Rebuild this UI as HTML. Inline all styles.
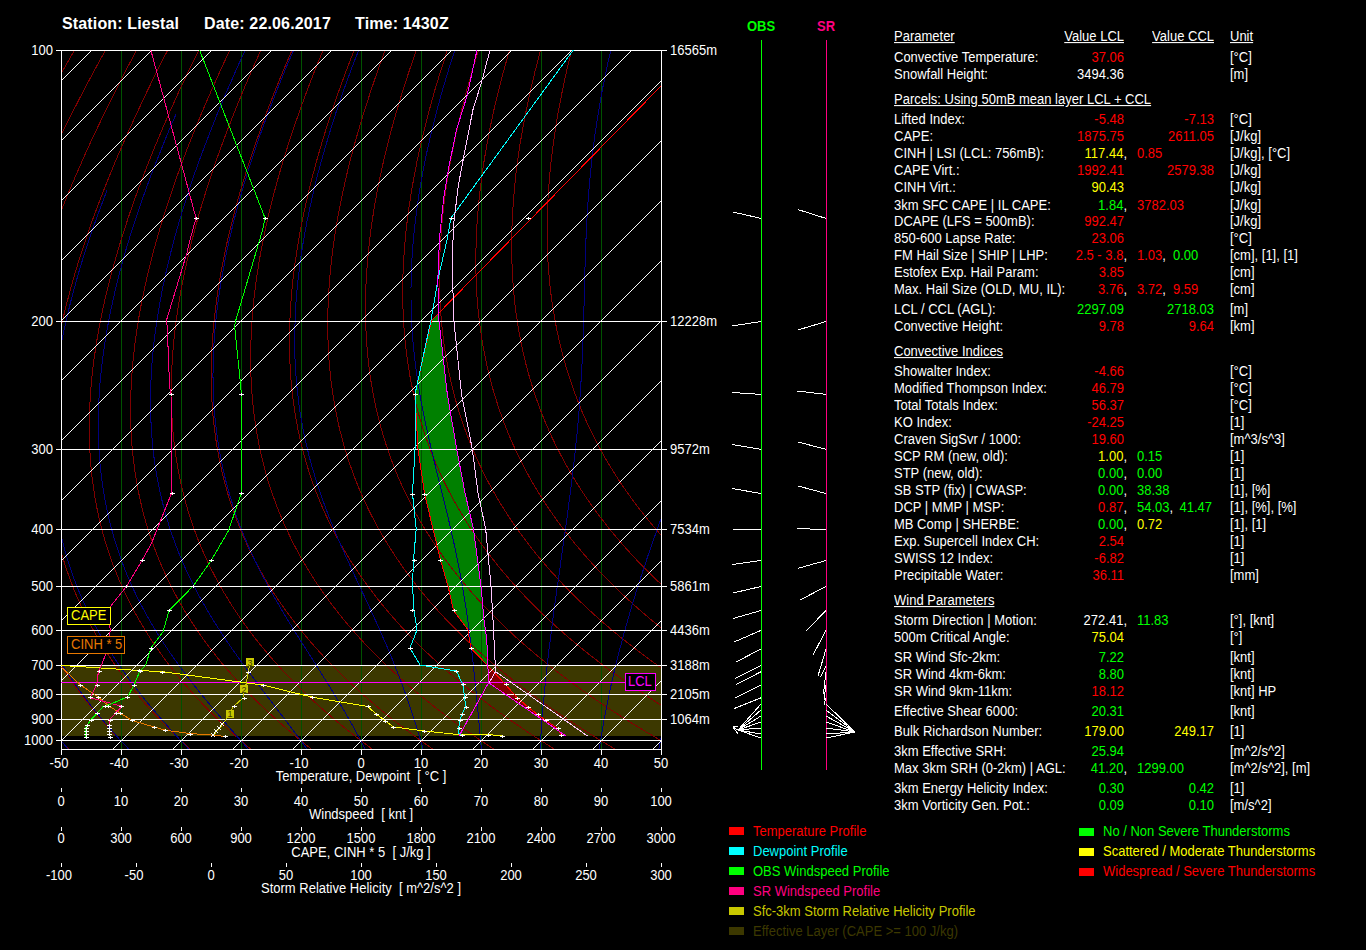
<!DOCTYPE html>
<html><head><meta charset="utf-8"><style>
html,body{margin:0;padding:0;background:#000;width:1366px;height:950px;overflow:hidden;}
.t{position:absolute;font-family:"Liberation Sans",sans-serif;white-space:pre;line-height:16px;}
svg{position:absolute;left:0;top:0;}
</style></head><body>
<svg width="1366" height="950" viewBox="0 0 1366 950" shape-rendering="crispEdges">
<defs><clipPath id="cp"><rect x="61" y="50" width="601" height="700"/></clipPath></defs>
<rect x="61" y="665" width="600" height="71" fill="#3c3800"/>
<polygon points="437.7,314.0 439.4,321.0 447.3,394.0 456.7,449.0 465.0,493.0 473.5,529.0 481.0,586.0 484.0,620.0 486.8,640.0 488.0,666.0 488.6,666.4 471.0,648.5 467.9,629.8 453.6,610.5 448.0,586.0 440.5,560.0 433.0,529.0 424.5,493.5 418.0,449.0 415.0,394.0 417.0,385.0 431.0,321.0 437.7,314.0" fill="#008000" stroke="none"/>
<polygon points="488.6,666.4 505.5,684.5 517.0,697.5 528.0,707.0 537.5,714.5 546.0,720.5 558.0,728.5 562.0,735.0 566.0,736.0 488.6,682.7" fill="#800000" stroke="none"/>
<line x1="121.5" y1="50" x2="121.5" y2="749" stroke="#005200" stroke-width="1" />
<line x1="181.5" y1="50" x2="181.5" y2="749" stroke="#005200" stroke-width="1" />
<line x1="241.5" y1="50" x2="241.5" y2="749" stroke="#005200" stroke-width="1" />
<line x1="301.5" y1="50" x2="301.5" y2="749" stroke="#005200" stroke-width="1" />
<line x1="361.5" y1="50" x2="361.5" y2="749" stroke="#005200" stroke-width="1" />
<line x1="421.5" y1="50" x2="421.5" y2="749" stroke="#005200" stroke-width="1" />
<line x1="481.5" y1="50" x2="481.5" y2="749" stroke="#005200" stroke-width="1" />
<line x1="541.5" y1="50" x2="541.5" y2="749" stroke="#005200" stroke-width="1" />
<line x1="601.5" y1="50" x2="601.5" y2="749" stroke="#005200" stroke-width="1" />
<polyline points="72.3,2.4 57.2,27.1 43.4,50.1 30.8,71.5 19.3,91.6 8.7,110.5 -1.1,128.3 -10.0,145.0 -18.3,160.9 -26.0,176.0 -33.2,190.3 -39.8,203.9 -45.9,216.9 -51.7,229.3 -57.0,241.2 -62.0,252.6 -66.7,263.5 -71.0,273.9 -75.1,284.0 -78.9,293.7 -82.5,303.0 -85.8,312.0 -89.0,320.7 -91.9,329.1 -94.7,337.2 -97.3,345.0 -99.7,352.6 -102.0,360.0 -104.1,367.2 -106.1,374.1 -108.0,380.8 -109.7,387.4 -111.4,393.8 -112.9,400.0 -114.4,406.0 -115.7,411.9 -117.0,417.6 -118.1,423.2 -119.2,428.6 -120.2,433.9 -121.2,439.1 -122.1,444.2 -122.9,449.1 -123.6,453.9 -124.3,458.7 -124.9,463.3 -125.5,467.8 -126.0,472.3 -126.5,476.6 -126.9,480.9 -127.3,485.0 -127.7,489.1 -128.0,493.1 -128.2,497.0 -128.5,500.9 -128.6,504.7 -128.8,508.4 -128.9,512.0 -129.0,515.6 -129.1,519.1 -129.1,522.6 -129.1,526.0 -129.1,529.3 -129.0,532.6 -128.9,535.8 -128.8,539.0 -128.7,542.1 -128.6,545.2 -128.4,548.2 -128.2,551.2 -128.0,554.2 -127.8,557.1 -127.5,559.9 -127.3,562.7 -127.0,565.5 -126.7,568.2 -126.4,570.9 -126.1,573.5 -125.7,576.1 -125.4,578.7 -125.0,581.3 -124.6,583.8 -124.2,586.2 -123.8,588.7 -123.4,591.1 -123.0,593.5 -122.5,595.8 -122.1,598.1 -121.6,600.4 -121.2,602.7 -120.7,604.9 -120.2,607.1 -119.7,609.3 -119.2,611.5 -118.7,613.6 -118.2,615.7 -117.6,617.8 -117.1,619.8 -116.5,621.9 -116.0,623.9 -115.4,625.9 -114.9,627.8 -114.3,629.8 -113.7,631.7 -113.1,633.6 -112.6,635.5 -112.0,637.4 -111.4,639.2 -110.8,641.0 -110.1,642.8 -109.5,644.6 -108.9,646.4 -108.3,648.1 -107.7,649.9 -107.0,651.6 -106.4,653.3 -105.8,655.0 -105.1,656.7 -104.5,658.3 -103.8,659.9 -103.2,661.6 -102.5,663.2 -101.9,664.8 -101.2,666.3 -100.5,667.9 -99.9,669.5 -99.2,671.0 -98.5,672.5 -97.8,674.0 -97.2,675.5 -96.5,677.0 -95.8,678.5 -95.1,679.9 -94.4,681.4 -93.7,682.8 -93.0,684.2 -92.3,685.6 -91.7,687.0 -91.0,688.4 -90.3,689.8 -89.6,691.2 -88.9,692.5 -88.2,693.9 -87.5,695.2 -86.7,696.5 -86.0,697.8 -85.3,699.1 -84.6,700.4 -83.9,701.7 -83.2,703.0 -82.5,704.3 -81.8,705.5 -81.1,706.8 -80.3,708.0 -79.6,709.2 -78.9,710.4 -78.2,711.7 -77.5,712.9 -76.8,714.0 -76.0,715.2 -75.3,716.4 -74.6,717.6 -73.9,718.7 -73.2,719.9 -72.4,721.0 -71.7,722.2 -71.0,723.3 -70.3,724.4 -69.5,725.5 -68.8,726.6 -68.1,727.7 -67.4,728.8 -66.7,729.9 -65.9,731.0 -65.2,732.1 -64.5,733.1 -63.8,734.2 -63.0,735.2 -62.3,736.3 -61.6,737.3 -60.9,738.4 -60.1,739.4 -59.4,740.4 -56.5,744.4 -53.1,749.0" stroke="#800000" stroke-width="1" fill="none" clip-path="url(#cp)"/>
<polyline points="102.5,2.4 87.8,27.1 74.5,50.1 62.3,71.5 51.2,91.6 41.0,110.5 31.7,128.3 23.1,145.0 15.2,160.9 7.8,176.0 1.1,190.3 -5.2,203.9 -11.0,216.9 -16.4,229.3 -21.5,241.2 -26.1,252.6 -30.5,263.5 -34.6,273.9 -38.3,284.0 -41.9,293.7 -45.2,303.0 -48.2,312.0 -51.1,320.7 -53.8,329.1 -56.3,337.2 -58.6,345.0 -60.8,352.6 -62.8,360.0 -64.7,367.2 -66.4,374.1 -68.1,380.8 -69.6,387.4 -71.0,393.8 -72.3,400.0 -73.5,406.0 -74.7,411.9 -75.7,417.6 -76.6,423.2 -77.5,428.6 -78.3,433.9 -79.1,439.1 -79.7,444.2 -80.3,449.1 -80.9,453.9 -81.4,458.7 -81.8,463.3 -82.2,467.8 -82.5,472.3 -82.8,476.6 -83.0,480.9 -83.2,485.0 -83.4,489.1 -83.5,493.1 -83.6,497.0 -83.6,500.9 -83.7,504.7 -83.6,508.4 -83.6,512.0 -83.5,515.6 -83.4,519.1 -83.2,522.6 -83.1,526.0 -82.9,529.3 -82.7,532.6 -82.4,535.8 -82.2,539.0 -81.9,542.1 -81.6,545.2 -81.3,548.2 -80.9,551.2 -80.6,554.2 -80.2,557.1 -79.8,559.9 -79.4,562.7 -78.9,565.5 -78.5,568.2 -78.0,570.9 -77.6,573.5 -77.1,576.1 -76.6,578.7 -76.1,581.3 -75.5,583.8 -75.0,586.2 -74.5,588.7 -73.9,591.1 -73.3,593.5 -72.8,595.8 -72.2,598.1 -71.6,600.4 -71.0,602.7 -70.4,604.9 -69.7,607.1 -69.1,609.3 -68.5,611.5 -67.8,613.6 -67.2,615.7 -66.5,617.8 -65.9,619.8 -65.2,621.9 -64.5,623.9 -63.8,625.9 -63.1,627.8 -62.4,629.8 -61.7,631.7 -61.0,633.6 -60.3,635.5 -59.6,637.4 -58.9,639.2 -58.2,641.0 -57.4,642.8 -56.7,644.6 -56.0,646.4 -55.2,648.1 -54.5,649.9 -53.8,651.6 -53.0,653.3 -52.2,655.0 -51.5,656.7 -50.7,658.3 -50.0,659.9 -49.2,661.6 -48.4,663.2 -47.7,664.8 -46.9,666.3 -46.1,667.9 -45.3,669.5 -44.6,671.0 -43.8,672.5 -43.0,674.0 -42.2,675.5 -41.4,677.0 -40.6,678.5 -39.8,679.9 -39.1,681.4 -38.3,682.8 -37.5,684.2 -36.7,685.6 -35.9,687.0 -35.1,688.4 -34.3,689.8 -33.5,691.2 -32.7,692.5 -31.9,693.9 -31.1,695.2 -30.3,696.5 -29.4,697.8 -28.6,699.1 -27.8,700.4 -27.0,701.7 -26.2,703.0 -25.4,704.3 -24.6,705.5 -23.8,706.8 -23.0,708.0 -22.2,709.2 -21.3,710.4 -20.5,711.7 -19.7,712.9 -18.9,714.0 -18.1,715.2 -17.3,716.4 -16.5,717.6 -15.7,718.7 -14.8,719.9 -14.0,721.0 -13.2,722.2 -12.4,723.3 -11.6,724.4 -10.8,725.5 -10.0,726.6 -9.2,727.7 -8.3,728.8 -7.5,729.9 -6.7,731.0 -5.9,732.1 -5.1,733.1 -4.3,734.2 -3.5,735.2 -2.7,736.3 -1.8,737.3 -1.0,738.4 -0.2,739.4 0.6,740.4 3.8,744.4 7.6,749.0" stroke="#800000" stroke-width="1" fill="none" clip-path="url(#cp)"/>
<polyline points="132.7,2.4 118.4,27.1 105.5,50.1 93.8,71.5 83.1,91.6 73.4,110.5 64.4,128.3 56.2,145.0 48.7,160.9 41.7,176.0 35.3,190.3 29.3,203.9 23.9,216.9 18.8,229.3 14.1,241.2 9.7,252.6 5.7,263.5 1.9,273.9 -1.6,284.0 -4.8,293.7 -7.8,303.0 -10.6,312.0 -13.2,320.7 -15.6,329.1 -17.8,337.2 -19.9,345.0 -21.8,352.6 -23.6,360.0 -25.2,367.2 -26.8,374.1 -28.2,380.8 -29.4,387.4 -30.6,393.8 -31.7,400.0 -32.7,406.0 -33.6,411.9 -34.4,417.6 -35.2,423.2 -35.8,428.6 -36.4,433.9 -36.9,439.1 -37.4,444.2 -37.8,449.1 -38.1,453.9 -38.4,458.7 -38.7,463.3 -38.9,467.8 -39.0,472.3 -39.1,476.6 -39.1,480.9 -39.2,485.0 -39.1,489.1 -39.1,493.1 -39.0,497.0 -38.8,500.9 -38.7,504.7 -38.5,508.4 -38.2,512.0 -38.0,515.6 -37.7,519.1 -37.4,522.6 -37.1,526.0 -36.7,529.3 -36.3,532.6 -35.9,535.8 -35.5,539.0 -35.1,542.1 -34.6,545.2 -34.1,548.2 -33.6,551.2 -33.1,554.2 -32.6,557.1 -32.0,559.9 -31.5,562.7 -30.9,565.5 -30.3,568.2 -29.7,570.9 -29.1,573.5 -28.4,576.1 -27.8,578.7 -27.1,581.3 -26.5,583.8 -25.8,586.2 -25.1,588.7 -24.4,591.1 -23.7,593.5 -23.0,595.8 -22.3,598.1 -21.5,600.4 -20.8,602.7 -20.1,604.9 -19.3,607.1 -18.5,609.3 -17.8,611.5 -17.0,613.6 -16.2,615.7 -15.4,617.8 -14.6,619.8 -13.8,621.9 -13.0,623.9 -12.2,625.9 -11.4,627.8 -10.6,629.8 -9.8,631.7 -8.9,633.6 -8.1,635.5 -7.3,637.4 -6.4,639.2 -5.6,641.0 -4.7,642.8 -3.9,644.6 -3.0,646.4 -2.2,648.1 -1.3,649.9 -0.5,651.6 0.4,653.3 1.3,655.0 2.1,656.7 3.0,658.3 3.9,659.9 4.8,661.6 5.6,663.2 6.5,664.8 7.4,666.3 8.3,667.9 9.2,669.5 10.1,671.0 11.0,672.5 11.8,674.0 12.7,675.5 13.6,677.0 14.5,678.5 15.4,679.9 16.3,681.4 17.2,682.8 18.1,684.2 19.0,685.6 19.9,687.0 20.8,688.4 21.7,689.8 22.6,691.2 23.5,692.5 24.4,693.9 25.3,695.2 26.2,696.5 27.1,697.8 28.1,699.1 29.0,700.4 29.9,701.7 30.8,703.0 31.7,704.3 32.6,705.5 33.5,706.8 34.4,708.0 35.3,709.2 36.2,710.4 37.1,711.7 38.0,712.9 38.9,714.0 39.8,715.2 40.7,716.4 41.7,717.6 42.6,718.7 43.5,719.9 44.4,721.0 45.3,722.2 46.2,723.3 47.1,724.4 48.0,725.5 48.9,726.6 49.8,727.7 50.7,728.8 51.6,729.9 52.5,731.0 53.4,732.1 54.3,733.1 55.2,734.2 56.1,735.2 57.0,736.3 57.9,737.3 58.8,738.4 59.7,739.4 60.6,740.4 64.2,744.4 68.3,749.0" stroke="#800000" stroke-width="1" fill="none" clip-path="url(#cp)"/>
<polyline points="162.8,2.4 149.1,27.1 136.6,50.1 125.3,71.5 115.1,91.6 105.7,110.5 97.2,128.3 89.3,145.0 82.2,160.9 75.6,176.0 69.5,190.3 63.9,203.9 58.8,216.9 54.0,229.3 49.6,241.2 45.6,252.6 41.8,263.5 38.4,273.9 35.2,284.0 32.2,293.7 29.5,303.0 27.0,312.0 24.7,320.7 22.5,329.1 20.6,337.2 18.8,345.0 17.1,352.6 15.6,360.0 14.2,367.2 12.9,374.1 11.7,380.8 10.7,387.4 9.8,393.8 8.9,400.0 8.1,406.0 7.5,411.9 6.9,417.6 6.3,423.2 5.9,428.6 5.5,433.9 5.2,439.1 4.9,444.2 4.7,449.1 4.6,453.9 4.5,458.7 4.5,463.3 4.5,467.8 4.5,472.3 4.6,476.6 4.8,480.9 4.9,485.0 5.1,489.1 5.4,493.1 5.7,497.0 6.0,500.9 6.3,504.7 6.7,508.4 7.1,512.0 7.5,515.6 8.0,519.1 8.5,522.6 9.0,526.0 9.5,529.3 10.0,532.6 10.6,535.8 11.2,539.0 11.8,542.1 12.4,545.2 13.0,548.2 13.7,551.2 14.4,554.2 15.0,557.1 15.7,559.9 16.5,562.7 17.2,565.5 17.9,568.2 18.7,570.9 19.4,573.5 20.2,576.1 21.0,578.7 21.8,581.3 22.6,583.8 23.4,586.2 24.3,588.7 25.1,591.1 25.9,593.5 26.8,595.8 27.6,598.1 28.5,600.4 29.4,602.7 30.3,604.9 31.1,607.1 32.0,609.3 32.9,611.5 33.8,613.6 34.8,615.7 35.7,617.8 36.6,619.8 37.5,621.9 38.4,623.9 39.4,625.9 40.3,627.8 41.3,629.8 42.2,631.7 43.2,633.6 44.1,635.5 45.1,637.4 46.0,639.2 47.0,641.0 47.9,642.8 48.9,644.6 49.9,646.4 50.9,648.1 51.8,649.9 52.8,651.6 53.8,653.3 54.8,655.0 55.8,656.7 56.7,658.3 57.7,659.9 58.7,661.6 59.7,663.2 60.7,664.8 61.7,666.3 62.7,667.9 63.7,669.5 64.7,671.0 65.7,672.5 66.7,674.0 67.7,675.5 68.7,677.0 69.7,678.5 70.7,679.9 71.7,681.4 72.7,682.8 73.7,684.2 74.7,685.6 75.7,687.0 76.7,688.4 77.7,689.8 78.7,691.2 79.7,692.5 80.7,693.9 81.7,695.2 82.7,696.5 83.7,697.8 84.7,699.1 85.8,700.4 86.8,701.7 87.8,703.0 88.8,704.3 89.8,705.5 90.8,706.8 91.8,708.0 92.8,709.2 93.8,710.4 94.8,711.7 95.8,712.9 96.8,714.0 97.8,715.2 98.8,716.4 99.8,717.6 100.8,718.7 101.8,719.9 102.8,721.0 103.8,722.2 104.8,723.3 105.8,724.4 106.8,725.5 107.8,726.6 108.7,727.7 109.7,728.8 110.7,729.9 111.7,731.0 112.7,732.1 113.7,733.1 114.7,734.2 115.7,735.2 116.7,736.3 117.6,737.3 118.6,738.4 119.6,739.4 120.6,740.4 124.5,744.4 129.1,749.0" stroke="#800000" stroke-width="1" fill="none" clip-path="url(#cp)"/>
<polyline points="193.0,2.4 179.7,27.1 167.7,50.1 156.8,71.5 147.0,91.6 138.1,110.5 129.9,128.3 122.5,145.0 115.6,160.9 109.4,176.0 103.7,190.3 98.5,203.9 93.6,216.9 89.2,229.3 85.2,241.2 81.4,252.6 78.0,263.5 74.8,273.9 71.9,284.0 69.3,293.7 66.8,303.0 64.6,312.0 62.6,320.7 60.7,329.1 59.0,337.2 57.4,345.0 56.0,352.6 54.8,360.0 53.6,367.2 52.6,374.1 51.7,380.8 50.8,387.4 50.1,393.8 49.5,400.0 49.0,406.0 48.5,411.9 48.1,417.6 47.8,423.2 47.6,428.6 47.4,433.9 47.3,439.1 47.3,444.2 47.3,449.1 47.3,453.9 47.4,458.7 47.6,463.3 47.8,467.8 48.0,472.3 48.3,476.6 48.7,480.9 49.0,485.0 49.4,489.1 49.8,493.1 50.3,497.0 50.8,500.9 51.3,504.7 51.9,508.4 52.4,512.0 53.0,515.6 53.7,519.1 54.3,522.6 55.0,526.0 55.7,529.3 56.4,532.6 57.1,535.8 57.8,539.0 58.6,542.1 59.4,545.2 60.2,548.2 61.0,551.2 61.8,554.2 62.7,557.1 63.5,559.9 64.4,562.7 65.3,565.5 66.1,568.2 67.0,570.9 68.0,573.5 68.9,576.1 69.8,578.7 70.7,581.3 71.7,583.8 72.7,586.2 73.6,588.7 74.6,591.1 75.6,593.5 76.6,595.8 77.6,598.1 78.6,600.4 79.6,602.7 80.6,604.9 81.6,607.1 82.6,609.3 83.6,611.5 84.7,613.6 85.7,615.7 86.8,617.8 87.8,619.8 88.9,621.9 89.9,623.9 91.0,625.9 92.0,627.8 93.1,629.8 94.2,631.7 95.2,633.6 96.3,635.5 97.4,637.4 98.5,639.2 99.6,641.0 100.6,642.8 101.7,644.6 102.8,646.4 103.9,648.1 105.0,649.9 106.1,651.6 107.2,653.3 108.3,655.0 109.4,656.7 110.5,658.3 111.6,659.9 112.7,661.6 113.8,663.2 114.9,664.8 116.0,666.3 117.1,667.9 118.2,669.5 119.3,671.0 120.4,672.5 121.5,674.0 122.6,675.5 123.7,677.0 124.8,678.5 126.0,679.9 127.1,681.4 128.2,682.8 129.3,684.2 130.4,685.6 131.5,687.0 132.6,688.4 133.7,689.8 134.8,691.2 135.9,692.5 137.0,693.9 138.1,695.2 139.2,696.5 140.3,697.8 141.4,699.1 142.5,700.4 143.6,701.7 144.7,703.0 145.8,704.3 147.0,705.5 148.1,706.8 149.1,708.0 150.2,709.2 151.3,710.4 152.4,711.7 153.5,712.9 154.6,714.0 155.7,715.2 156.8,716.4 157.9,717.6 159.0,718.7 160.1,719.9 161.2,721.0 162.3,722.2 163.4,723.3 164.4,724.4 165.5,725.5 166.6,726.6 167.7,727.7 168.8,728.8 169.9,729.9 170.9,731.0 172.0,732.1 173.1,733.1 174.2,734.2 175.2,735.2 176.3,736.3 177.4,737.3 178.5,738.4 179.5,739.4 180.6,740.4 184.8,744.4 189.8,749.0" stroke="#800000" stroke-width="1" fill="none" clip-path="url(#cp)"/>
<polyline points="223.1,2.4 210.3,27.1 198.8,50.1 188.4,71.5 178.9,91.6 170.4,110.5 162.6,128.3 155.6,145.0 149.1,160.9 143.3,176.0 137.9,190.3 133.0,203.9 128.5,216.9 124.5,229.3 120.7,241.2 117.3,252.6 114.2,263.5 111.3,273.9 108.7,284.0 106.3,293.7 104.2,303.0 102.2,312.0 100.4,320.7 98.8,329.1 97.4,337.2 96.1,345.0 95.0,352.6 93.9,360.0 93.0,367.2 92.2,374.1 91.6,380.8 91.0,387.4 90.5,393.8 90.1,400.0 89.8,406.0 89.6,411.9 89.4,417.6 89.3,423.2 89.3,428.6 89.3,433.9 89.4,439.1 89.6,444.2 89.8,449.1 90.1,453.9 90.4,458.7 90.7,463.3 91.1,467.8 91.6,472.3 92.0,476.6 92.6,480.9 93.1,485.0 93.7,489.1 94.3,493.1 94.9,497.0 95.6,500.9 96.3,504.7 97.0,508.4 97.8,512.0 98.5,515.6 99.3,519.1 100.1,522.6 101.0,526.0 101.8,529.3 102.7,532.6 103.6,535.8 104.5,539.0 105.4,542.1 106.4,545.2 107.3,548.2 108.3,551.2 109.3,554.2 110.3,557.1 111.3,559.9 112.3,562.7 113.3,565.5 114.4,568.2 115.4,570.9 116.5,573.5 117.5,576.1 118.6,578.7 119.7,581.3 120.8,583.8 121.9,586.2 123.0,588.7 124.1,591.1 125.2,593.5 126.3,595.8 127.5,598.1 128.6,600.4 129.7,602.7 130.9,604.9 132.0,607.1 133.2,609.3 134.4,611.5 135.5,613.6 136.7,615.7 137.9,617.8 139.0,619.8 140.2,621.9 141.4,623.9 142.6,625.9 143.8,627.8 145.0,629.8 146.2,631.7 147.3,633.6 148.5,635.5 149.7,637.4 150.9,639.2 152.1,641.0 153.3,642.8 154.6,644.6 155.8,646.4 157.0,648.1 158.2,649.9 159.4,651.6 160.6,653.3 161.8,655.0 163.0,656.7 164.2,658.3 165.4,659.9 166.7,661.6 167.9,663.2 169.1,664.8 170.3,666.3 171.5,667.9 172.7,669.5 173.9,671.0 175.2,672.5 176.4,674.0 177.6,675.5 178.8,677.0 180.0,678.5 181.2,679.9 182.4,681.4 183.6,682.8 184.9,684.2 186.1,685.6 187.3,687.0 188.5,688.4 189.7,689.8 190.9,691.2 192.1,692.5 193.3,693.9 194.5,695.2 195.7,696.5 196.9,697.8 198.1,699.1 199.3,700.4 200.5,701.7 201.7,703.0 202.9,704.3 204.1,705.5 205.3,706.8 206.5,708.0 207.7,709.2 208.9,710.4 210.1,711.7 211.3,712.9 212.5,714.0 213.7,715.2 214.9,716.4 216.0,717.6 217.2,718.7 218.4,719.9 219.6,721.0 220.8,722.2 221.9,723.3 223.1,724.4 224.3,725.5 225.5,726.6 226.6,727.7 227.8,728.8 229.0,729.9 230.2,731.0 231.3,732.1 232.5,733.1 233.6,734.2 234.8,735.2 236.0,736.3 237.1,737.3 238.3,738.4 239.4,739.4 240.6,740.4 245.2,744.4 250.5,749.0" stroke="#800000" stroke-width="1" fill="none" clip-path="url(#cp)"/>
<polyline points="253.3,2.4 240.9,27.1 229.8,50.1 219.9,71.5 210.9,91.6 202.7,110.5 195.4,128.3 188.7,145.0 182.6,160.9 177.1,176.0 172.1,190.3 167.6,203.9 163.4,216.9 159.7,229.3 156.3,241.2 153.1,252.6 150.3,263.5 147.8,273.9 145.5,284.0 143.4,293.7 141.5,303.0 139.8,312.0 138.3,320.7 137.0,329.1 135.8,337.2 134.8,345.0 133.9,352.6 133.1,360.0 132.5,367.2 131.9,374.1 131.5,380.8 131.1,387.4 130.9,393.8 130.7,400.0 130.6,406.0 130.6,411.9 130.7,417.6 130.8,423.2 131.0,428.6 131.3,433.9 131.6,439.1 131.9,444.2 132.3,449.1 132.8,453.9 133.3,458.7 133.9,463.3 134.5,467.8 135.1,472.3 135.8,476.6 136.5,480.9 137.2,485.0 137.9,489.1 138.7,493.1 139.6,497.0 140.4,500.9 141.3,504.7 142.2,508.4 143.1,512.0 144.0,515.6 145.0,519.1 146.0,522.6 147.0,526.0 148.0,529.3 149.1,532.6 150.1,535.8 151.2,539.0 152.3,542.1 153.4,545.2 154.5,548.2 155.6,551.2 156.7,554.2 157.9,557.1 159.0,559.9 160.2,562.7 161.4,565.5 162.6,568.2 163.8,570.9 165.0,573.5 166.2,576.1 167.4,578.7 168.6,581.3 169.9,583.8 171.1,586.2 172.3,588.7 173.6,591.1 174.8,593.5 176.1,595.8 177.4,598.1 178.6,600.4 179.9,602.7 181.2,604.9 182.5,607.1 183.8,609.3 185.1,611.5 186.4,613.6 187.7,615.7 189.0,617.8 190.3,619.8 191.6,621.9 192.9,623.9 194.2,625.9 195.5,627.8 196.8,629.8 198.1,631.7 199.4,633.6 200.8,635.5 202.1,637.4 203.4,639.2 204.7,641.0 206.0,642.8 207.4,644.6 208.7,646.4 210.0,648.1 211.3,649.9 212.7,651.6 214.0,653.3 215.3,655.0 216.6,656.7 218.0,658.3 219.3,659.9 220.6,661.6 221.9,663.2 223.3,664.8 224.6,666.3 225.9,667.9 227.2,669.5 228.6,671.0 229.9,672.5 231.2,674.0 232.5,675.5 233.8,677.0 235.2,678.5 236.5,679.9 237.8,681.4 239.1,682.8 240.4,684.2 241.7,685.6 243.1,687.0 244.4,688.4 245.7,689.8 247.0,691.2 248.3,692.5 249.6,693.9 250.9,695.2 252.2,696.5 253.5,697.8 254.8,699.1 256.1,700.4 257.4,701.7 258.7,703.0 260.0,704.3 261.3,705.5 262.6,706.8 263.9,708.0 265.2,709.2 266.5,710.4 267.8,711.7 269.0,712.9 270.3,714.0 271.6,715.2 272.9,716.4 274.2,717.6 275.4,718.7 276.7,719.9 278.0,721.0 279.3,722.2 280.5,723.3 281.8,724.4 283.1,725.5 284.3,726.6 285.6,727.7 286.9,728.8 288.1,729.9 289.4,731.0 290.6,732.1 291.9,733.1 293.1,734.2 294.4,735.2 295.6,736.3 296.9,737.3 298.1,738.4 299.4,739.4 300.6,740.4 305.5,744.4 311.3,749.0" stroke="#800000" stroke-width="1" fill="none" clip-path="url(#cp)"/>
<polyline points="283.4,2.4 271.6,27.1 260.9,50.1 251.4,71.5 242.8,91.6 235.1,110.5 228.1,128.3 221.8,145.0 216.1,160.9 211.0,176.0 206.3,190.3 202.1,203.9 198.3,216.9 194.9,229.3 191.8,241.2 189.0,252.6 186.5,263.5 184.2,273.9 182.2,284.0 180.4,293.7 178.8,303.0 177.4,312.0 176.2,320.7 175.1,329.1 174.2,337.2 173.5,345.0 172.8,352.6 172.3,360.0 171.9,367.2 171.6,374.1 171.4,380.8 171.3,387.4 171.3,393.8 171.3,400.0 171.5,406.0 171.7,411.9 172.0,417.6 172.3,423.2 172.7,428.6 173.2,433.9 173.7,439.1 174.3,444.2 174.9,449.1 175.5,453.9 176.3,458.7 177.0,463.3 177.8,467.8 178.6,472.3 179.5,476.6 180.3,480.9 181.3,485.0 182.2,489.1 183.2,493.1 184.2,497.0 185.2,500.9 186.3,504.7 187.3,508.4 188.4,512.0 189.6,515.6 190.7,519.1 191.8,522.6 193.0,526.0 194.2,529.3 195.4,532.6 196.6,535.8 197.8,539.0 199.1,542.1 200.3,545.2 201.6,548.2 202.9,551.2 204.2,554.2 205.5,557.1 206.8,559.9 208.1,562.7 209.4,565.5 210.8,568.2 212.1,570.9 213.5,573.5 214.8,576.1 216.2,578.7 217.6,581.3 218.9,583.8 220.3,586.2 221.7,588.7 223.1,591.1 224.5,593.5 225.9,595.8 227.3,598.1 228.7,600.4 230.1,602.7 231.5,604.9 232.9,607.1 234.4,609.3 235.8,611.5 237.2,613.6 238.6,615.7 240.1,617.8 241.5,619.8 242.9,621.9 244.4,623.9 245.8,625.9 247.2,627.8 248.7,629.8 250.1,631.7 251.5,633.6 253.0,635.5 254.4,637.4 255.9,639.2 257.3,641.0 258.7,642.8 260.2,644.6 261.6,646.4 263.1,648.1 264.5,649.9 266.0,651.6 267.4,653.3 268.8,655.0 270.3,656.7 271.7,658.3 273.1,659.9 274.6,661.6 276.0,663.2 277.5,664.8 278.9,666.3 280.3,667.9 281.8,669.5 283.2,671.0 284.6,672.5 286.0,674.0 287.5,675.5 288.9,677.0 290.3,678.5 291.8,679.9 293.2,681.4 294.6,682.8 296.0,684.2 297.4,685.6 298.8,687.0 300.3,688.4 301.7,689.8 303.1,691.2 304.5,692.5 305.9,693.9 307.3,695.2 308.7,696.5 310.1,697.8 311.5,699.1 312.9,700.4 314.3,701.7 315.7,703.0 317.1,704.3 318.5,705.5 319.9,706.8 321.3,708.0 322.7,709.2 324.0,710.4 325.4,711.7 326.8,712.9 328.2,714.0 329.6,715.2 330.9,716.4 332.3,717.6 333.7,718.7 335.0,719.9 336.4,721.0 337.8,722.2 339.1,723.3 340.5,724.4 341.8,725.5 343.2,726.6 344.5,727.7 345.9,728.8 347.2,729.9 348.6,731.0 349.9,732.1 351.3,733.1 352.6,734.2 353.9,735.2 355.3,736.3 356.6,737.3 357.9,738.4 359.3,739.4 360.6,740.4 365.9,744.4 372.0,749.0" stroke="#800000" stroke-width="1" fill="none" clip-path="url(#cp)"/>
<polyline points="313.6,2.4 302.2,27.1 292.0,50.1 282.9,71.5 274.7,91.6 267.4,110.5 260.9,128.3 255.0,145.0 249.6,160.9 244.9,176.0 240.6,190.3 236.7,203.9 233.2,216.9 230.1,229.3 227.3,241.2 224.9,252.6 222.7,263.5 220.7,273.9 219.0,284.0 217.5,293.7 216.2,303.0 215.1,312.0 214.1,320.7 213.3,329.1 212.7,337.2 212.1,345.0 211.7,352.6 211.5,360.0 211.3,367.2 211.3,374.1 211.3,380.8 211.4,387.4 211.6,393.8 211.9,400.0 212.3,406.0 212.7,411.9 213.2,417.6 213.8,423.2 214.4,428.6 215.1,433.9 215.8,439.1 216.6,444.2 217.4,449.1 218.3,453.9 219.2,458.7 220.1,463.3 221.1,467.8 222.1,472.3 223.2,476.6 224.2,480.9 225.4,485.0 226.5,489.1 227.6,493.1 228.8,497.0 230.0,500.9 231.3,504.7 232.5,508.4 233.8,512.0 235.1,515.6 236.4,519.1 237.7,522.6 239.0,526.0 240.4,529.3 241.7,532.6 243.1,535.8 244.5,539.0 245.9,542.1 247.3,545.2 248.8,548.2 250.2,551.2 251.6,554.2 253.1,557.1 254.6,559.9 256.0,562.7 257.5,565.5 259.0,568.2 260.5,570.9 262.0,573.5 263.5,576.1 265.0,578.7 266.5,581.3 268.0,583.8 269.5,586.2 271.1,588.7 272.6,591.1 274.1,593.5 275.7,595.8 277.2,598.1 278.7,600.4 280.3,602.7 281.8,604.9 283.4,607.1 284.9,609.3 286.5,611.5 288.0,613.6 289.6,615.7 291.2,617.8 292.7,619.8 294.3,621.9 295.8,623.9 297.4,625.9 299.0,627.8 300.5,629.8 302.1,631.7 303.6,633.6 305.2,635.5 306.8,637.4 308.3,639.2 309.9,641.0 311.4,642.8 313.0,644.6 314.6,646.4 316.1,648.1 317.7,649.9 319.2,651.6 320.8,653.3 322.3,655.0 323.9,656.7 325.4,658.3 327.0,659.9 328.5,661.6 330.1,663.2 331.6,664.8 333.2,666.3 334.7,667.9 336.3,669.5 337.8,671.0 339.4,672.5 340.9,674.0 342.4,675.5 344.0,677.0 345.5,678.5 347.0,679.9 348.5,681.4 350.1,682.8 351.6,684.2 353.1,685.6 354.6,687.0 356.2,688.4 357.7,689.8 359.2,691.2 360.7,692.5 362.2,693.9 363.7,695.2 365.2,696.5 366.7,697.8 368.2,699.1 369.7,700.4 371.2,701.7 372.7,703.0 374.2,704.3 375.7,705.5 377.2,706.8 378.6,708.0 380.1,709.2 381.6,710.4 383.1,711.7 384.6,712.9 386.0,714.0 387.5,715.2 389.0,716.4 390.4,717.6 391.9,718.7 393.3,719.9 394.8,721.0 396.3,722.2 397.7,723.3 399.2,724.4 400.6,725.5 402.0,726.6 403.5,727.7 404.9,728.8 406.4,729.9 407.8,731.0 409.2,732.1 410.7,733.1 412.1,734.2 413.5,735.2 414.9,736.3 416.3,737.3 417.8,738.4 419.2,739.4 420.6,740.4 426.2,744.4 432.7,749.0" stroke="#800000" stroke-width="1" fill="none" clip-path="url(#cp)"/>
<polyline points="343.8,2.4 332.8,27.1 323.1,50.1 314.4,71.5 306.7,91.6 299.8,110.5 293.6,128.3 288.1,145.0 283.1,160.9 278.7,176.0 274.8,190.3 271.3,203.9 268.1,216.9 265.3,229.3 262.9,241.2 260.7,252.6 258.8,263.5 257.2,273.9 255.7,284.0 254.5,293.7 253.5,303.0 252.7,312.0 252.0,320.7 251.5,329.1 251.1,337.2 250.8,345.0 250.7,352.6 250.7,360.0 250.7,367.2 250.9,374.1 251.2,380.8 251.6,387.4 252.0,393.8 252.5,400.0 253.1,406.0 253.8,411.9 254.5,417.6 255.3,423.2 256.1,428.6 257.0,433.9 258.0,439.1 258.9,444.2 260.0,449.1 261.0,453.9 262.1,458.7 263.3,463.3 264.4,467.8 265.6,472.3 266.9,476.6 268.1,480.9 269.4,485.0 270.8,489.1 272.1,493.1 273.5,497.0 274.8,500.9 276.3,504.7 277.7,508.4 279.1,512.0 280.6,515.6 282.1,519.1 283.5,522.6 285.0,526.0 286.6,529.3 288.1,532.6 289.6,535.8 291.2,539.0 292.7,542.1 294.3,545.2 295.9,548.2 297.5,551.2 299.1,554.2 300.7,557.1 302.3,559.9 303.9,562.7 305.6,565.5 307.2,568.2 308.8,570.9 310.5,573.5 312.1,576.1 313.8,578.7 315.4,581.3 317.1,583.8 318.8,586.2 320.4,588.7 322.1,591.1 323.8,593.5 325.4,595.8 327.1,598.1 328.8,600.4 330.5,602.7 332.1,604.9 333.8,607.1 335.5,609.3 337.2,611.5 338.9,613.6 340.6,615.7 342.3,617.8 343.9,619.8 345.6,621.9 347.3,623.9 349.0,625.9 350.7,627.8 352.4,629.8 354.1,631.7 355.7,633.6 357.4,635.5 359.1,637.4 360.8,639.2 362.5,641.0 364.1,642.8 365.8,644.6 367.5,646.4 369.2,648.1 370.8,649.9 372.5,651.6 374.2,653.3 375.9,655.0 377.5,656.7 379.2,658.3 380.9,659.9 382.5,661.6 384.2,663.2 385.8,664.8 387.5,666.3 389.1,667.9 390.8,669.5 392.4,671.0 394.1,672.5 395.7,674.0 397.4,675.5 399.0,677.0 400.6,678.5 402.3,679.9 403.9,681.4 405.5,682.8 407.2,684.2 408.8,685.6 410.4,687.0 412.0,688.4 413.7,689.8 415.3,691.2 416.9,692.5 418.5,693.9 420.1,695.2 421.7,696.5 423.3,697.8 424.9,699.1 426.5,700.4 428.1,701.7 429.7,703.0 431.3,704.3 432.9,705.5 434.4,706.8 436.0,708.0 437.6,709.2 439.2,710.4 440.7,711.7 442.3,712.9 443.9,714.0 445.4,715.2 447.0,716.4 448.6,717.6 450.1,718.7 451.7,719.9 453.2,721.0 454.8,722.2 456.3,723.3 457.8,724.4 459.4,725.5 460.9,726.6 462.4,727.7 464.0,728.8 465.5,729.9 467.0,731.0 468.5,732.1 470.1,733.1 471.6,734.2 473.1,735.2 474.6,736.3 476.1,737.3 477.6,738.4 479.1,739.4 480.6,740.4 486.6,744.4 493.5,749.0" stroke="#800000" stroke-width="1" fill="none" clip-path="url(#cp)"/>
<polyline points="373.9,2.4 363.4,27.1 354.2,50.1 345.9,71.5 338.6,91.6 332.1,110.5 326.3,128.3 321.2,145.0 316.6,160.9 312.6,176.0 309.0,190.3 305.8,203.9 303.0,216.9 300.6,229.3 298.4,241.2 296.6,252.6 295.0,263.5 293.6,273.9 292.5,284.0 291.6,293.7 290.8,303.0 290.3,312.0 289.9,320.7 289.6,329.1 289.5,337.2 289.5,345.0 289.6,352.6 289.8,360.0 290.2,367.2 290.6,374.1 291.1,380.8 291.7,387.4 292.4,393.8 293.1,400.0 294.0,406.0 294.8,411.9 295.8,417.6 296.8,423.2 297.8,428.6 298.9,433.9 300.1,439.1 301.3,444.2 302.5,449.1 303.8,453.9 305.1,458.7 306.4,463.3 307.8,467.8 309.2,472.3 310.6,476.6 312.0,480.9 313.5,485.0 315.0,489.1 316.5,493.1 318.1,497.0 319.7,500.9 321.2,504.7 322.8,508.4 324.5,512.0 326.1,515.6 327.7,519.1 329.4,522.6 331.1,526.0 332.7,529.3 334.4,532.6 336.1,535.8 337.9,539.0 339.6,542.1 341.3,545.2 343.0,548.2 344.8,551.2 346.5,554.2 348.3,557.1 350.1,559.9 351.8,562.7 353.6,565.5 355.4,568.2 357.2,570.9 359.0,573.5 360.8,576.1 362.6,578.7 364.4,581.3 366.2,583.8 368.0,586.2 369.8,588.7 371.6,591.1 373.4,593.5 375.2,595.8 377.0,598.1 378.8,600.4 380.6,602.7 382.5,604.9 384.3,607.1 386.1,609.3 387.9,611.5 389.7,613.6 391.5,615.7 393.4,617.8 395.2,619.8 397.0,621.9 398.8,623.9 400.6,625.9 402.4,627.8 404.2,629.8 406.0,631.7 407.8,633.6 409.6,635.5 411.4,637.4 413.2,639.2 415.0,641.0 416.8,642.8 418.6,644.6 420.4,646.4 422.2,648.1 424.0,649.9 425.8,651.6 427.6,653.3 429.4,655.0 431.2,656.7 432.9,658.3 434.7,659.9 436.5,661.6 438.2,663.2 440.0,664.8 441.8,666.3 443.5,667.9 445.3,669.5 447.1,671.0 448.8,672.5 450.6,674.0 452.3,675.5 454.1,677.0 455.8,678.5 457.5,679.9 459.3,681.4 461.0,682.8 462.8,684.2 464.5,685.6 466.2,687.0 467.9,688.4 469.6,689.8 471.4,691.2 473.1,692.5 474.8,693.9 476.5,695.2 478.2,696.5 479.9,697.8 481.6,699.1 483.3,700.4 485.0,701.7 486.7,703.0 488.4,704.3 490.0,705.5 491.7,706.8 493.4,708.0 495.1,709.2 496.7,710.4 498.4,711.7 500.1,712.9 501.7,714.0 503.4,715.2 505.0,716.4 506.7,717.6 508.3,718.7 510.0,719.9 511.6,721.0 513.2,722.2 514.9,723.3 516.5,724.4 518.1,725.5 519.8,726.6 521.4,727.7 523.0,728.8 524.6,729.9 526.2,731.0 527.8,732.1 529.4,733.1 531.0,734.2 532.6,735.2 534.2,736.3 535.8,737.3 537.4,738.4 539.0,739.4 540.6,740.4 546.9,744.4 554.2,749.0" stroke="#800000" stroke-width="1" fill="none" clip-path="url(#cp)"/>
<polyline points="404.1,2.4 394.1,27.1 385.2,50.1 377.4,71.5 370.6,91.6 364.5,110.5 359.1,128.3 354.3,145.0 350.1,160.9 346.4,176.0 343.2,190.3 340.4,203.9 337.9,216.9 335.8,229.3 334.0,241.2 332.4,252.6 331.2,263.5 330.1,273.9 329.3,284.0 328.6,293.7 328.2,303.0 327.9,312.0 327.8,320.7 327.8,329.1 327.9,337.2 328.2,345.0 328.5,352.6 329.0,360.0 329.6,367.2 330.3,374.1 331.0,380.8 331.9,387.4 332.8,393.8 333.8,400.0 334.8,406.0 335.9,411.9 337.1,417.6 338.3,423.2 339.5,428.6 340.9,433.9 342.2,439.1 343.6,444.2 345.0,449.1 346.5,453.9 348.0,458.7 349.5,463.3 351.1,467.8 352.7,472.3 354.3,476.6 355.9,480.9 357.6,485.0 359.3,489.1 361.0,493.1 362.7,497.0 364.5,500.9 366.2,504.7 368.0,508.4 369.8,512.0 371.6,515.6 373.4,519.1 375.2,522.6 377.1,526.0 378.9,529.3 380.8,532.6 382.6,535.8 384.5,539.0 386.4,542.1 388.3,545.2 390.2,548.2 392.1,551.2 394.0,554.2 395.9,557.1 397.8,559.9 399.8,562.7 401.7,565.5 403.6,568.2 405.5,570.9 407.5,573.5 409.4,576.1 411.4,578.7 413.3,581.3 415.2,583.8 417.2,586.2 419.1,588.7 421.1,591.1 423.0,593.5 425.0,595.8 426.9,598.1 428.9,600.4 430.8,602.7 432.8,604.9 434.7,607.1 436.7,609.3 438.6,611.5 440.6,613.6 442.5,615.7 444.5,617.8 446.4,619.8 448.3,621.9 450.3,623.9 452.2,625.9 454.1,627.8 456.1,629.8 458.0,631.7 459.9,633.6 461.9,635.5 463.8,637.4 465.7,639.2 467.6,641.0 469.5,642.8 471.5,644.6 473.4,646.4 475.3,648.1 477.2,649.9 479.1,651.6 481.0,653.3 482.9,655.0 484.8,656.7 486.7,658.3 488.6,659.9 490.4,661.6 492.3,663.2 494.2,664.8 496.1,666.3 498.0,667.9 499.8,669.5 501.7,671.0 503.6,672.5 505.4,674.0 507.3,675.5 509.1,677.0 511.0,678.5 512.8,679.9 514.7,681.4 516.5,682.8 518.3,684.2 520.2,685.6 522.0,687.0 523.8,688.4 525.6,689.8 527.5,691.2 529.3,692.5 531.1,693.9 532.9,695.2 534.7,696.5 536.5,697.8 538.3,699.1 540.1,700.4 541.9,701.7 543.7,703.0 545.4,704.3 547.2,705.5 549.0,706.8 550.8,708.0 552.5,709.2 554.3,710.4 556.1,711.7 557.8,712.9 559.6,714.0 561.3,715.2 563.1,716.4 564.8,717.6 566.5,718.7 568.3,719.9 570.0,721.0 571.7,722.2 573.5,723.3 575.2,724.4 576.9,725.5 578.6,726.6 580.3,727.7 582.0,728.8 583.7,729.9 585.4,731.0 587.1,732.1 588.8,733.1 590.5,734.2 592.2,735.2 593.9,736.3 595.6,737.3 597.2,738.4 598.9,739.4 600.6,740.4 607.2,744.4 614.9,749.0" stroke="#800000" stroke-width="1" fill="none" clip-path="url(#cp)"/>
<polyline points="434.2,2.4 424.7,27.1 416.3,50.1 409.0,71.5 402.5,91.6 396.8,110.5 391.8,128.3 387.4,145.0 383.6,160.9 380.3,176.0 377.4,190.3 374.9,203.9 372.8,216.9 371.0,229.3 369.5,241.2 368.3,252.6 367.3,263.5 366.6,273.9 366.0,284.0 365.7,293.7 365.5,303.0 365.5,312.0 365.6,320.7 365.9,329.1 366.3,337.2 366.8,345.0 367.5,352.6 368.2,360.0 369.0,367.2 369.9,374.1 370.9,380.8 372.0,387.4 373.2,393.8 374.4,400.0 375.6,406.0 377.0,411.9 378.3,417.6 379.8,423.2 381.2,428.6 382.8,433.9 384.3,439.1 385.9,444.2 387.6,449.1 389.2,453.9 390.9,458.7 392.7,463.3 394.4,467.8 396.2,472.3 398.0,476.6 399.8,480.9 401.7,485.0 403.6,489.1 405.5,493.1 407.4,497.0 409.3,500.9 411.2,504.7 413.2,508.4 415.1,512.0 417.1,515.6 419.1,519.1 421.1,522.6 423.1,526.0 425.1,529.3 427.1,532.6 429.2,535.8 431.2,539.0 433.2,542.1 435.3,545.2 437.3,548.2 439.4,551.2 441.5,554.2 443.5,557.1 445.6,559.9 447.7,562.7 449.7,565.5 451.8,568.2 453.9,570.9 456.0,573.5 458.1,576.1 460.2,578.7 462.2,581.3 464.3,583.8 466.4,586.2 468.5,588.7 470.6,591.1 472.7,593.5 474.8,595.8 476.8,598.1 478.9,600.4 481.0,602.7 483.1,604.9 485.2,607.1 487.3,609.3 489.3,611.5 491.4,613.6 493.5,615.7 495.6,617.8 497.6,619.8 499.7,621.9 501.8,623.9 503.8,625.9 505.9,627.8 507.9,629.8 510.0,631.7 512.0,633.6 514.1,635.5 516.1,637.4 518.2,639.2 520.2,641.0 522.2,642.8 524.3,644.6 526.3,646.4 528.3,648.1 530.4,649.9 532.4,651.6 534.4,653.3 536.4,655.0 538.4,656.7 540.4,658.3 542.4,659.9 544.4,661.6 546.4,663.2 548.4,664.8 550.4,666.3 552.4,667.9 554.3,669.5 556.3,671.0 558.3,672.5 560.3,674.0 562.2,675.5 564.2,677.0 566.1,678.5 568.1,679.9 570.0,681.4 572.0,682.8 573.9,684.2 575.8,685.6 577.8,687.0 579.7,688.4 581.6,689.8 583.5,691.2 585.5,692.5 587.4,693.9 589.3,695.2 591.2,696.5 593.1,697.8 595.0,699.1 596.9,700.4 598.8,701.7 600.6,703.0 602.5,704.3 604.4,705.5 606.3,706.8 608.1,708.0 610.0,709.2 611.9,710.4 613.7,711.7 615.6,712.9 617.4,714.0 619.3,715.2 621.1,716.4 622.9,717.6 624.8,718.7 626.6,719.9 628.4,721.0 630.2,722.2 632.1,723.3 633.9,724.4 635.7,725.5 637.5,726.6 639.3,727.7 641.1,728.8 642.9,729.9 644.7,731.0 646.4,732.1 648.2,733.1 650.0,734.2 651.8,735.2 653.5,736.3 655.3,737.3 657.1,738.4 658.8,739.4 660.6,740.4 667.6,744.4 675.6,749.0" stroke="#800000" stroke-width="1" fill="none" clip-path="url(#cp)"/>
<polyline points="464.4,2.4 455.3,27.1 447.4,50.1 440.5,71.5 434.4,91.6 429.2,110.5 424.6,128.3 420.6,145.0 417.1,160.9 414.2,176.0 411.6,190.3 409.5,203.9 407.7,216.9 406.2,229.3 405.1,241.2 404.2,252.6 403.5,263.5 403.0,273.9 402.8,284.0 402.7,293.7 402.8,303.0 403.1,312.0 403.5,320.7 404.1,329.1 404.7,337.2 405.5,345.0 406.4,352.6 407.4,360.0 408.5,367.2 409.6,374.1 410.8,380.8 412.2,387.4 413.5,393.8 415.0,400.0 416.5,406.0 418.0,411.9 419.6,417.6 421.3,423.2 423.0,428.6 424.7,433.9 426.5,439.1 428.3,444.2 430.1,449.1 432.0,453.9 433.9,458.7 435.8,463.3 437.8,467.8 439.7,472.3 441.7,476.6 443.7,480.9 445.8,485.0 447.8,489.1 449.9,493.1 452.0,497.0 454.1,500.9 456.2,504.7 458.3,508.4 460.5,512.0 462.6,515.6 464.8,519.1 466.9,522.6 469.1,526.0 471.3,529.3 473.5,532.6 475.7,535.8 477.9,539.0 480.1,542.1 482.3,545.2 484.5,548.2 486.7,551.2 488.9,554.2 491.1,557.1 493.4,559.9 495.6,562.7 497.8,565.5 500.0,568.2 502.3,570.9 504.5,573.5 506.7,576.1 509.0,578.7 511.2,581.3 513.4,583.8 515.6,586.2 517.9,588.7 520.1,591.1 522.3,593.5 524.5,595.8 526.8,598.1 529.0,600.4 531.2,602.7 533.4,604.9 535.6,607.1 537.8,609.3 540.0,611.5 542.2,613.6 544.4,615.7 546.6,617.8 548.8,619.8 551.0,621.9 553.2,623.9 555.4,625.9 557.6,627.8 559.8,629.8 562.0,631.7 564.1,633.6 566.3,635.5 568.5,637.4 570.6,639.2 572.8,641.0 574.9,642.8 577.1,644.6 579.2,646.4 581.4,648.1 583.5,649.9 585.7,651.6 587.8,653.3 589.9,655.0 592.0,656.7 594.2,658.3 596.3,659.9 598.4,661.6 600.5,663.2 602.6,664.8 604.7,666.3 606.8,667.9 608.9,669.5 610.9,671.0 613.0,672.5 615.1,674.0 617.2,675.5 619.2,677.0 621.3,678.5 623.3,679.9 625.4,681.4 627.4,682.8 629.5,684.2 631.5,685.6 633.6,687.0 635.6,688.4 637.6,689.8 639.6,691.2 641.7,692.5 643.7,693.9 645.7,695.2 647.7,696.5 649.7,697.8 651.7,699.1 653.7,700.4 655.7,701.7 657.6,703.0 659.6,704.3 661.6,705.5 663.6,706.8 665.5,708.0 667.5,709.2 669.4,710.4 671.4,711.7 673.3,712.9 675.3,714.0 677.2,715.2 679.1,716.4 681.1,717.6 683.0,718.7 684.9,719.9 686.8,721.0 688.7,722.2 690.6,723.3 692.5,724.4 694.4,725.5 696.3,726.6 698.2,727.7 700.1,728.8 702.0,729.9 703.9,731.0 705.8,732.1 707.6,733.1 709.5,734.2 711.3,735.2 713.2,736.3 715.1,737.3 716.9,738.4 718.8,739.4 720.6,740.4 727.9,744.4 736.4,749.0" stroke="#800000" stroke-width="1" fill="none" clip-path="url(#cp)"/>
<polyline points="494.5,2.4 485.9,27.1 478.5,50.1 472.0,71.5 466.4,91.6 461.5,110.5 457.3,128.3 453.7,145.0 450.6,160.9 448.0,176.0 445.8,190.3 444.0,203.9 442.6,216.9 441.5,229.3 440.6,241.2 440.0,252.6 439.6,263.5 439.5,273.9 439.6,284.0 439.8,293.7 440.2,303.0 440.7,312.0 441.4,320.7 442.2,329.1 443.1,337.2 444.2,345.0 445.3,352.6 446.6,360.0 447.9,367.2 449.3,374.1 450.8,380.8 452.3,387.4 453.9,393.8 455.6,400.0 457.3,406.0 459.1,411.9 460.9,417.6 462.8,423.2 464.7,428.6 466.6,433.9 468.6,439.1 470.6,444.2 472.6,449.1 474.7,453.9 476.8,458.7 478.9,463.3 481.1,467.8 483.3,472.3 485.4,476.6 487.6,480.9 489.9,485.0 492.1,489.1 494.4,493.1 496.6,497.0 498.9,500.9 501.2,504.7 503.5,508.4 505.8,512.0 508.1,515.6 510.4,519.1 512.8,522.6 515.1,526.0 517.5,529.3 519.8,532.6 522.2,535.8 524.5,539.0 526.9,542.1 529.3,545.2 531.6,548.2 534.0,551.2 536.4,554.2 538.7,557.1 541.1,559.9 543.5,562.7 545.9,565.5 548.2,568.2 550.6,570.9 553.0,573.5 555.4,576.1 557.7,578.7 560.1,581.3 562.5,583.8 564.9,586.2 567.2,588.7 569.6,591.1 572.0,593.5 574.3,595.8 576.7,598.1 579.0,600.4 581.4,602.7 583.7,604.9 586.1,607.1 588.4,609.3 590.8,611.5 593.1,613.6 595.4,615.7 597.7,617.8 600.1,619.8 602.4,621.9 604.7,623.9 607.0,625.9 609.3,627.8 611.6,629.8 613.9,631.7 616.2,633.6 618.5,635.5 620.8,637.4 623.1,639.2 625.4,641.0 627.6,642.8 629.9,644.6 632.2,646.4 634.4,648.1 636.7,649.9 638.9,651.6 641.2,653.3 643.4,655.0 645.7,656.7 647.9,658.3 650.1,659.9 652.3,661.6 654.6,663.2 656.8,664.8 659.0,666.3 661.2,667.9 663.4,669.5 665.6,671.0 667.8,672.5 669.9,674.0 672.1,675.5 674.3,677.0 676.5,678.5 678.6,679.9 680.8,681.4 682.9,682.8 685.1,684.2 687.2,685.6 689.4,687.0 691.5,688.4 693.6,689.8 695.7,691.2 697.9,692.5 700.0,693.9 702.1,695.2 704.2,696.5 706.3,697.8 708.4,699.1 710.5,700.4 712.5,701.7 714.6,703.0 716.7,704.3 718.8,705.5 720.8,706.8 722.9,708.0 724.9,709.2 727.0,710.4 729.0,711.7 731.1,712.9 733.1,714.0 735.1,715.2 737.2,716.4 739.2,717.6 741.2,718.7 743.2,719.9 745.2,721.0 747.2,722.2 749.2,723.3 751.2,724.4 753.2,725.5 755.2,726.6 757.2,727.7 759.2,728.8 761.1,729.9 763.1,731.0 765.1,732.1 767.0,733.1 769.0,734.2 770.9,735.2 772.9,736.3 774.8,737.3 776.7,738.4 778.7,739.4 780.6,740.4 788.3,744.4 797.1,749.0" stroke="#800000" stroke-width="1" fill="none" clip-path="url(#cp)"/>
<polyline points="524.7,2.4 516.6,27.1 509.5,50.1 503.5,71.5 498.3,91.6 493.8,110.5 490.0,128.3 486.8,145.0 484.1,160.9 481.9,176.0 480.1,190.3 478.6,203.9 477.5,216.9 476.7,229.3 476.2,241.2 475.9,252.6 475.8,263.5 476.0,273.9 476.3,284.0 476.8,293.7 477.5,303.0 478.3,312.0 479.3,320.7 480.4,329.1 481.6,337.2 482.9,345.0 484.3,352.6 485.7,360.0 487.3,367.2 489.0,374.1 490.7,380.8 492.4,387.4 494.3,393.8 496.2,400.0 498.1,406.0 500.1,411.9 502.2,417.6 504.2,423.2 506.4,428.6 508.5,433.9 510.7,439.1 512.9,444.2 515.2,449.1 517.5,453.9 519.8,458.7 522.1,463.3 524.4,467.8 526.8,472.3 529.1,476.6 531.5,480.9 534.0,485.0 536.4,489.1 538.8,493.1 541.3,497.0 543.7,500.9 546.2,504.7 548.7,508.4 551.1,512.0 553.6,515.6 556.1,519.1 558.6,522.6 561.1,526.0 563.6,529.3 566.2,532.6 568.7,535.8 571.2,539.0 573.7,542.1 576.2,545.2 578.8,548.2 581.3,551.2 583.8,554.2 586.4,557.1 588.9,559.9 591.4,562.7 593.9,565.5 596.5,568.2 599.0,570.9 601.5,573.5 604.0,576.1 606.5,578.7 609.1,581.3 611.6,583.8 614.1,586.2 616.6,588.7 619.1,591.1 621.6,593.5 624.1,595.8 626.6,598.1 629.1,600.4 631.6,602.7 634.0,604.9 636.5,607.1 639.0,609.3 641.5,611.5 643.9,613.6 646.4,615.7 648.8,617.8 651.3,619.8 653.7,621.9 656.2,623.9 658.6,625.9 661.1,627.8 663.5,629.8 665.9,631.7 668.3,633.6 670.7,635.5 673.1,637.4 675.5,639.2 677.9,641.0 680.3,642.8 682.7,644.6 685.1,646.4 687.5,648.1 689.9,649.9 692.2,651.6 694.6,653.3 696.9,655.0 699.3,656.7 701.6,658.3 704.0,659.9 706.3,661.6 708.6,663.2 711.0,664.8 713.3,666.3 715.6,667.9 717.9,669.5 720.2,671.0 722.5,672.5 724.8,674.0 727.1,675.5 729.3,677.0 731.6,678.5 733.9,679.9 736.1,681.4 738.4,682.8 740.6,684.2 742.9,685.6 745.1,687.0 747.4,688.4 749.6,689.8 751.8,691.2 754.0,692.5 756.3,693.9 758.5,695.2 760.7,696.5 762.9,697.8 765.1,699.1 767.2,700.4 769.4,701.7 771.6,703.0 773.8,704.3 775.9,705.5 778.1,706.8 780.3,708.0 782.4,709.2 784.6,710.4 786.7,711.7 788.8,712.9 791.0,714.0 793.1,715.2 795.2,716.4 797.3,717.6 799.4,718.7 801.5,719.9 803.6,721.0 805.7,722.2 807.8,723.3 809.9,724.4 812.0,725.5 814.1,726.6 816.1,727.7 818.2,728.8 820.3,729.9 822.3,731.0 824.4,732.1 826.4,733.1 828.4,734.2 830.5,735.2 832.5,736.3 834.5,737.3 836.6,738.4 838.6,739.4 840.6,740.4 848.6,744.4 857.8,749.0" stroke="#800000" stroke-width="1" fill="none" clip-path="url(#cp)"/>
<polyline points="554.8,2.4 547.2,27.1 540.6,50.1 535.0,71.5 530.2,91.6 526.2,110.5 522.8,128.3 519.9,145.0 517.6,160.9 515.7,176.0 514.3,190.3 513.2,203.9 512.4,216.9 511.9,229.3 511.7,241.2 511.7,252.6 512.0,263.5 512.4,273.9 513.1,284.0 513.9,293.7 514.8,303.0 515.9,312.0 517.2,320.7 518.5,329.1 520.0,337.2 521.5,345.0 523.2,352.6 524.9,360.0 526.7,367.2 528.6,374.1 530.6,380.8 532.6,387.4 534.7,393.8 536.8,400.0 539.0,406.0 541.2,411.9 543.4,417.6 545.7,423.2 548.1,428.6 550.4,433.9 552.8,439.1 555.3,444.2 557.7,449.1 560.2,453.9 562.7,458.7 565.2,463.3 567.7,467.8 570.3,472.3 572.9,476.6 575.4,480.9 578.0,485.0 580.6,489.1 583.3,493.1 585.9,497.0 588.5,500.9 591.2,504.7 593.8,508.4 596.5,512.0 599.1,515.6 601.8,519.1 604.5,522.6 607.1,526.0 609.8,529.3 612.5,532.6 615.2,535.8 617.9,539.0 620.5,542.1 623.2,545.2 625.9,548.2 628.6,551.2 631.3,554.2 634.0,557.1 636.6,559.9 639.3,562.7 642.0,565.5 644.7,568.2 647.3,570.9 650.0,573.5 652.7,576.1 655.3,578.7 658.0,581.3 660.6,583.8 663.3,586.2 665.9,588.7 668.6,591.1 671.2,593.5 673.9,595.8 676.5,598.1 679.1,600.4 681.7,602.7 684.4,604.9 687.0,607.1 689.6,609.3 692.2,611.5 694.8,613.6 697.4,615.7 699.9,617.8 702.5,619.8 705.1,621.9 707.7,623.9 710.2,625.9 712.8,627.8 715.3,629.8 717.9,631.7 720.4,633.6 723.0,635.5 725.5,637.4 728.0,639.2 730.5,641.0 733.0,642.8 735.5,644.6 738.0,646.4 740.5,648.1 743.0,649.9 745.5,651.6 748.0,653.3 750.5,655.0 752.9,656.7 755.4,658.3 757.8,659.9 760.3,661.6 762.7,663.2 765.1,664.8 767.6,666.3 770.0,667.9 772.4,669.5 774.8,671.0 777.2,672.5 779.6,674.0 782.0,675.5 784.4,677.0 786.8,678.5 789.1,679.9 791.5,681.4 793.9,682.8 796.2,684.2 798.6,685.6 800.9,687.0 803.3,688.4 805.6,689.8 807.9,691.2 810.2,692.5 812.6,693.9 814.9,695.2 817.2,696.5 819.5,697.8 821.8,699.1 824.0,700.4 826.3,701.7 828.6,703.0 830.9,704.3 833.1,705.5 835.4,706.8 837.6,708.0 839.9,709.2 842.1,710.4 844.4,711.7 846.6,712.9 848.8,714.0 851.0,715.2 853.2,716.4 855.5,717.6 857.7,718.7 859.8,719.9 862.0,721.0 864.2,722.2 866.4,723.3 868.6,724.4 870.8,725.5 872.9,726.6 875.1,727.7 877.2,728.8 879.4,729.9 881.5,731.0 883.7,732.1 885.8,733.1 887.9,734.2 890.0,735.2 892.2,736.3 894.3,737.3 896.4,738.4 898.5,739.4 900.6,740.4 908.9,744.4 918.6,749.0" stroke="#800000" stroke-width="1" fill="none" clip-path="url(#cp)"/>
<polyline points="585.0,2.4 577.8,27.1 571.7,50.1 566.5,71.5 562.2,91.6 558.5,110.5 555.5,128.3 553.1,145.0 551.1,160.9 549.6,176.0 548.5,190.3 547.7,203.9 547.3,216.9 547.1,229.3 547.2,241.2 547.6,252.6 548.1,263.5 548.9,273.9 549.8,284.0 550.9,293.7 552.2,303.0 553.6,312.0 555.1,320.7 556.7,329.1 558.4,337.2 560.2,345.0 562.1,352.6 564.1,360.0 566.2,367.2 568.3,374.1 570.5,380.8 572.7,387.4 575.0,393.8 577.4,400.0 579.8,406.0 582.2,411.9 584.7,417.6 587.2,423.2 589.8,428.6 592.4,433.9 595.0,439.1 597.6,444.2 600.3,449.1 602.9,453.9 605.6,458.7 608.3,463.3 611.1,467.8 613.8,472.3 616.6,476.6 619.3,480.9 622.1,485.0 624.9,489.1 627.7,493.1 630.5,497.0 633.3,500.9 636.2,504.7 639.0,508.4 641.8,512.0 644.6,515.6 647.5,519.1 650.3,522.6 653.2,526.0 656.0,529.3 658.8,532.6 661.7,535.8 664.5,539.0 667.4,542.1 670.2,545.2 673.1,548.2 675.9,551.2 678.7,554.2 681.6,557.1 684.4,559.9 687.2,562.7 690.1,565.5 692.9,568.2 695.7,570.9 698.5,573.5 701.3,576.1 704.1,578.7 706.9,581.3 709.7,583.8 712.5,586.2 715.3,588.7 718.1,591.1 720.9,593.5 723.6,595.8 726.4,598.1 729.2,600.4 731.9,602.7 734.7,604.9 737.4,607.1 740.1,609.3 742.9,611.5 745.6,613.6 748.3,615.7 751.0,617.8 753.7,619.8 756.4,621.9 759.1,623.9 761.8,625.9 764.5,627.8 767.2,629.8 769.9,631.7 772.5,633.6 775.2,635.5 777.8,637.4 780.5,639.2 783.1,641.0 785.7,642.8 788.4,644.6 791.0,646.4 793.6,648.1 796.2,649.9 798.8,651.6 801.4,653.3 804.0,655.0 806.5,656.7 809.1,658.3 811.7,659.9 814.2,661.6 816.8,663.2 819.3,664.8 821.9,666.3 824.4,667.9 826.9,669.5 829.4,671.0 832.0,672.5 834.5,674.0 837.0,675.5 839.4,677.0 841.9,678.5 844.4,679.9 846.9,681.4 849.3,682.8 851.8,684.2 854.3,685.6 856.7,687.0 859.1,688.4 861.6,689.8 864.0,691.2 866.4,692.5 868.8,693.9 871.3,695.2 873.7,696.5 876.1,697.8 878.4,699.1 880.8,700.4 883.2,701.7 885.6,703.0 887.9,704.3 890.3,705.5 892.7,706.8 895.0,708.0 897.4,709.2 899.7,710.4 902.0,711.7 904.3,712.9 906.7,714.0 909.0,715.2 911.3,716.4 913.6,717.6 915.9,718.7 918.2,719.9 920.4,721.0 922.7,722.2 925.0,723.3 927.3,724.4 929.5,725.5 931.8,726.6 934.0,727.7 936.3,728.8 938.5,729.9 940.7,731.0 943.0,732.1 945.2,733.1 947.4,734.2 949.6,735.2 951.8,736.3 954.0,737.3 956.2,738.4 958.4,739.4 960.6,740.4 969.3,744.4 979.3,749.0" stroke="#800000" stroke-width="1" fill="none" clip-path="url(#cp)"/>
<polyline points="7.9,749.5 7.0,748.4 6.0,747.2 5.1,746.0 4.1,744.8 3.2,743.6 2.2,742.4 1.2,741.2 0.3,740.0 -0.7,738.8 -1.7,737.5 -2.6,736.3 -3.6,735.0 -4.6,733.8 -5.5,732.5 -6.5,731.2 -7.5,729.9 -8.4,728.6 -9.4,727.3 -10.4,726.0 -11.3,724.6 -12.3,723.3 -13.3,721.9 -14.2,720.6 -15.2,719.2 -16.2,717.8 -17.2,716.4 -18.1,715.0 -19.1,713.6 -20.1,712.1 -21.0,710.7 -22.0,709.2 -23.0,707.7 -23.9,706.3 -24.9,704.8 -25.9,703.2 -26.8,701.7 -27.8,700.2 -28.8,698.6 -29.7,697.1 -30.7,695.5 -31.7,693.9 -32.6,692.3 -33.6,690.6 -34.5,689.0 -35.5,687.3 -36.4,685.6 -37.4,684.0 -38.3,682.2 -39.3,680.5 -40.2,678.8 -41.2,677.0 -42.1,675.2 -43.1,673.4 -44.0,671.6 -44.9,669.8 -45.9,667.9 -46.8,666.0 -47.7,664.1 -48.6,662.2 -49.5,660.3 -50.5,658.3 -51.4,656.3 -52.3,654.3 -53.2,652.3 -54.1,650.2 -55.0,648.1 -55.8,646.0 -56.7,643.9 -57.6,641.8 -58.5,639.6 -59.3,637.4 -60.2,635.1 -61.0,632.9 -61.9,630.6 -62.7,628.2 -63.5,625.9 -64.3,623.5 -65.1,621.1 -65.9,618.6 -66.7,616.1 -67.5,613.6 -68.3,611.0 -69.0,608.4 -69.8,605.8 -70.5,603.1 -71.2,600.4 -72.0,597.7 -72.7,594.9 -73.3,592.1 -74.0,589.2 -74.7,586.2 -75.3,583.3 -75.9,580.3 -76.5,577.2 -77.1,574.1 -77.7,570.9 -78.2,567.7 -78.7,564.4 -79.2,561.0 -79.7,557.6 -80.2,554.2 -80.6,550.6 -81.0,547.0 -81.4,543.4 -81.7,539.6 -82.0,535.8 -82.3,532.0 -82.6,528.0 -82.8,524.0 -83.0,519.8 -83.1,515.6 -83.2,511.3 -83.2,506.9 -83.2,502.4 -83.2,497.8 -83.1,493.1 -83.0,488.3 -82.8,483.4 -82.5,478.3 -82.2,473.1 -81.8,467.8 -81.3,462.4 -80.7,456.8 -80.1,451.1 -79.4,445.2 -78.6,439.1 -77.7,432.9 -76.7,426.4 -75.6,419.8 -74.4,413.0 -73.1,406.0 -71.6,398.7 -70.0,391.2 -68.2,383.5 -66.3,375.5 -64.2,367.2 -61.9,358.6 -59.4,349.6" stroke="#000080" stroke-width="1" fill="none" clip-path="url(#cp)"/>
<polyline points="68.6,749.5 67.6,748.4 66.5,747.2 65.5,746.0 64.4,744.8 63.4,743.6 62.3,742.4 61.3,741.2 60.2,740.0 59.2,738.8 58.1,737.5 57.1,736.3 56.0,735.0 55.0,733.8 53.9,732.5 52.8,731.2 51.8,729.9 50.7,728.6 49.7,727.3 48.6,726.0 47.5,724.6 46.5,723.3 45.4,721.9 44.3,720.6 43.2,719.2 42.2,717.8 41.1,716.4 40.0,715.0 38.9,713.6 37.9,712.1 36.8,710.7 35.7,709.2 34.6,707.7 33.6,706.3 32.5,704.8 31.4,703.2 30.3,701.7 29.3,700.2 28.2,698.6 27.1,697.1 26.0,695.5 24.9,693.9 23.9,692.3 22.8,690.6 21.7,689.0 20.6,687.3 19.6,685.6 18.5,684.0 17.4,682.2 16.4,680.5 15.3,678.8 14.2,677.0 13.1,675.2 12.1,673.4 11.0,671.6 10.0,669.8 8.9,667.9 7.8,666.0 6.8,664.1 5.7,662.2 4.7,660.3 3.6,658.3 2.6,656.3 1.6,654.3 0.5,652.3 -0.5,650.2 -1.5,648.1 -2.6,646.0 -3.6,643.9 -4.6,641.8 -5.6,639.6 -6.6,637.4 -7.6,635.1 -8.6,632.9 -9.6,630.6 -10.6,628.2 -11.6,625.9 -12.5,623.5 -13.5,621.1 -14.4,618.6 -15.4,616.1 -16.3,613.6 -17.2,611.0 -18.2,608.4 -19.1,605.8 -20.0,603.1 -20.8,600.4 -21.7,597.7 -22.6,594.9 -23.4,592.1 -24.3,589.2 -25.1,586.2 -25.9,583.3 -26.7,580.3 -27.5,577.2 -28.2,574.1 -29.0,570.9 -29.7,567.7 -30.4,564.4 -31.1,561.0 -31.7,557.6 -32.4,554.2 -33.0,550.6 -33.6,547.0 -34.1,543.4 -34.7,539.6 -35.2,535.8 -35.7,532.0 -36.1,528.0 -36.5,524.0 -36.9,519.8 -37.3,515.6 -37.6,511.3 -37.8,506.9 -38.0,502.4 -38.2,497.8 -38.3,493.1 -38.4,488.3 -38.4,483.4 -38.4,478.3 -38.3,473.1 -38.1,467.8 -37.9,462.4 -37.6,456.8 -37.2,451.1 -36.7,445.2 -36.2,439.1 -35.5,432.9 -34.8,426.4 -34.0,419.8 -33.0,413.0 -31.9,406.0 -30.7,398.7 -29.4,391.2 -27.9,383.5 -26.3,375.5 -24.5,367.2 -22.5,358.6 -20.3,349.6 -17.9,340.4 -15.3,330.7 -12.4,320.7 -9.3,310.2 -5.9,299.3" stroke="#000080" stroke-width="1" fill="none" clip-path="url(#cp)"/>
<polyline points="129.0,749.5 128.0,748.4 126.9,747.2 125.8,746.0 124.7,744.8 123.6,743.6 122.4,742.4 121.3,741.2 120.2,740.0 119.1,738.8 118.0,737.5 116.9,736.3 115.7,735.0 114.6,733.8 113.5,732.5 112.3,731.2 111.2,729.9 110.1,728.6 108.9,727.3 107.8,726.0 106.6,724.6 105.5,723.3 104.3,721.9 103.2,720.6 102.0,719.2 100.9,717.8 99.7,716.4 98.5,715.0 97.4,713.6 96.2,712.1 95.0,710.7 93.9,709.2 92.7,707.7 91.5,706.3 90.3,704.8 89.2,703.2 88.0,701.7 86.8,700.2 85.6,698.6 84.4,697.1 83.3,695.5 82.1,693.9 80.9,692.3 79.7,690.6 78.5,689.0 77.3,687.3 76.1,685.6 75.0,684.0 73.8,682.2 72.6,680.5 71.4,678.8 70.2,677.0 69.0,675.2 67.8,673.4 66.6,671.6 65.5,669.8 64.3,667.9 63.1,666.0 61.9,664.1 60.7,662.2 59.5,660.3 58.4,658.3 57.2,656.3 56.0,654.3 54.9,652.3 53.7,650.2 52.5,648.1 51.4,646.0 50.2,643.9 49.0,641.8 47.9,639.6 46.7,637.4 45.6,635.1 44.5,632.9 43.3,630.6 42.2,628.2 41.1,625.9 40.0,623.5 38.8,621.1 37.7,618.6 36.6,616.1 35.5,613.6 34.5,611.0 33.4,608.4 32.3,605.8 31.3,603.1 30.2,600.4 29.2,597.7 28.2,594.9 27.1,592.1 26.1,589.2 25.1,586.2 24.2,583.3 23.2,580.3 22.2,577.2 21.3,574.1 20.4,570.9 19.5,567.7 18.6,564.4 17.7,561.0 16.9,557.6 16.1,554.2 15.3,550.6 14.5,547.0 13.7,543.4 13.0,539.6 12.3,535.8 11.6,532.0 10.9,528.0 10.3,524.0 9.7,519.8 9.2,515.6 8.7,511.3 8.2,506.9 7.8,502.4 7.4,497.8 7.0,493.1 6.8,488.3 6.5,483.4 6.3,478.3 6.2,473.1 6.1,467.8 6.1,462.4 6.2,456.8 6.3,451.1 6.5,445.2 6.8,439.1 7.2,432.9 7.7,426.4 8.3,419.8 8.9,413.0 9.7,406.0 10.7,398.7 11.7,391.2 12.9,383.5 14.3,375.5 15.8,367.2 17.4,358.6 19.3,349.6 21.4,340.4 23.7,330.7 26.2,320.7 29.0,310.2 32.1,299.3 35.5,287.9 39.3,276.0 43.4,263.5 47.9,250.3 52.8,236.5" stroke="#000080" stroke-width="1" fill="none" clip-path="url(#cp)"/>
<polyline points="189.1,749.5 188.0,748.4 186.9,747.2 185.8,746.0 184.7,744.8 183.6,743.6 182.5,742.4 181.3,741.2 180.2,740.0 179.1,738.8 177.9,737.5 176.8,736.3 175.6,735.0 174.5,733.8 173.3,732.5 172.2,731.2 171.0,729.9 169.8,728.6 168.6,727.3 167.5,726.0 166.3,724.6 165.1,723.3 163.9,721.9 162.7,720.6 161.5,719.2 160.3,717.8 159.1,716.4 157.8,715.0 156.6,713.6 155.4,712.1 154.2,710.7 152.9,709.2 151.7,707.7 150.4,706.3 149.2,704.8 147.9,703.2 146.7,701.7 145.4,700.2 144.2,698.6 142.9,697.1 141.6,695.5 140.4,693.9 139.1,692.3 137.8,690.6 136.6,689.0 135.3,687.3 134.0,685.6 132.7,684.0 131.4,682.2 130.1,680.5 128.8,678.8 127.6,677.0 126.3,675.2 125.0,673.4 123.7,671.6 122.4,669.8 121.1,667.9 119.8,666.0 118.5,664.1 117.2,662.2 115.9,660.3 114.6,658.3 113.3,656.3 112.0,654.3 110.7,652.3 109.4,650.2 108.1,648.1 106.8,646.0 105.5,643.9 104.2,641.8 102.9,639.6 101.7,637.4 100.4,635.1 99.1,632.9 97.8,630.6 96.5,628.2 95.3,625.9 94.0,623.5 92.7,621.1 91.5,618.6 90.2,616.1 89.0,613.6 87.7,611.0 86.5,608.4 85.3,605.8 84.1,603.1 82.8,600.4 81.6,597.7 80.4,594.9 79.3,592.1 78.1,589.2 76.9,586.2 75.8,583.3 74.6,580.3 73.5,577.2 72.4,574.1 71.3,570.9 70.2,567.7 69.1,564.4 68.1,561.0 67.0,557.6 66.0,554.2 65.0,550.6 64.0,547.0 63.1,543.4 62.1,539.6 61.2,535.8 60.3,532.0 59.5,528.0 58.7,524.0 57.9,519.8 57.1,515.6 56.4,511.3 55.7,506.9 55.0,502.4 54.4,497.8 53.8,493.1 53.3,488.3 52.8,483.4 52.4,478.3 52.1,473.1 51.7,467.8 51.5,462.4 51.3,456.8 51.2,451.1 51.1,445.2 51.2,439.1 51.3,432.9 51.5,426.4 51.8,419.8 52.2,413.0 52.7,406.0 53.4,398.7 54.1,391.2 55.0,383.5 56.1,375.5 57.3,367.2 58.7,358.6 60.2,349.6 62.0,340.4 63.9,330.7 66.1,320.7 68.6,310.2 71.3,299.3 74.4,287.9 77.7,276.0 81.4,263.5 85.6,250.3 90.1,236.5 95.2,221.9 100.8,206.6 107.0,190.3" stroke="#000080" stroke-width="1" fill="none" clip-path="url(#cp)"/>
<polyline points="248.5,749.5 247.5,748.4 246.5,747.2 245.5,746.0 244.4,744.8 243.4,743.6 242.4,742.4 241.3,741.2 240.2,740.0 239.2,738.8 238.1,737.5 237.0,736.3 235.9,735.0 234.8,733.8 233.7,732.5 232.6,731.2 231.5,729.9 230.3,728.6 229.2,727.3 228.0,726.0 226.9,724.6 225.7,723.3 224.6,721.9 223.4,720.6 222.2,719.2 221.0,717.8 219.8,716.4 218.6,715.0 217.4,713.6 216.2,712.1 214.9,710.7 213.7,709.2 212.5,707.7 211.2,706.3 210.0,704.8 208.7,703.2 207.4,701.7 206.2,700.2 204.9,698.6 203.6,697.1 202.3,695.5 201.0,693.9 199.7,692.3 198.4,690.6 197.1,689.0 195.7,687.3 194.4,685.6 193.1,684.0 191.7,682.2 190.4,680.5 189.0,678.8 187.7,677.0 186.3,675.2 185.0,673.4 183.6,671.6 182.2,669.8 180.8,667.9 179.5,666.0 178.1,664.1 176.7,662.2 175.3,660.3 173.9,658.3 172.5,656.3 171.1,654.3 169.7,652.3 168.3,650.2 166.9,648.1 165.5,646.0 164.1,643.9 162.7,641.8 161.3,639.6 159.9,637.4 158.4,635.1 157.0,632.9 155.6,630.6 154.2,628.2 152.8,625.9 151.4,623.5 150.0,621.1 148.6,618.6 147.2,616.1 145.8,613.6 144.4,611.0 143.0,608.4 141.6,605.8 140.2,603.1 138.9,600.4 137.5,597.7 136.1,594.9 134.8,592.1 133.4,589.2 132.1,586.2 130.8,583.3 129.4,580.3 128.1,577.2 126.8,574.1 125.5,570.9 124.3,567.7 123.0,564.4 121.7,561.0 120.5,557.6 119.3,554.2 118.1,550.6 116.9,547.0 115.7,543.4 114.6,539.6 113.5,535.8 112.4,532.0 111.3,528.0 110.3,524.0 109.2,519.8 108.3,515.6 107.3,511.3 106.4,506.9 105.5,502.4 104.6,497.8 103.8,493.1 103.0,488.3 102.3,483.4 101.6,478.3 101.0,473.1 100.4,467.8 99.9,462.4 99.5,456.8 99.1,451.1 98.8,445.2 98.5,439.1 98.4,432.9 98.3,426.4 98.3,419.8 98.4,413.0 98.6,406.0 99.0,398.7 99.4,391.2 100.0,383.5 100.7,375.5 101.6,367.2 102.7,358.6 103.9,349.6 105.3,340.4 106.9,330.7 108.7,320.7 110.8,310.2 113.2,299.3 115.8,287.9 118.8,276.0 122.1,263.5 125.8,250.3 130.0,236.5 134.6,221.9 139.7,206.6 145.5,190.3 151.9,173.0 159.1,154.7 167.0,135.1 176.0,114.1" stroke="#000080" stroke-width="1" fill="none" clip-path="url(#cp)"/>
<polyline points="307.2,749.5 306.4,748.4 305.5,747.2 304.7,746.0 303.8,744.8 303.0,743.6 302.1,742.4 301.2,741.2 300.3,740.0 299.4,738.8 298.5,737.5 297.6,736.3 296.6,735.0 295.7,733.8 294.7,732.5 293.8,731.2 292.8,729.9 291.8,728.6 290.8,727.3 289.8,726.0 288.8,724.6 287.8,723.3 286.8,721.9 285.7,720.6 284.7,719.2 283.6,717.8 282.6,716.4 281.5,715.0 280.4,713.6 279.3,712.1 278.2,710.7 277.1,709.2 276.0,707.7 274.8,706.3 273.7,704.8 272.5,703.2 271.3,701.7 270.2,700.2 269.0,698.6 267.8,697.1 266.6,695.5 265.3,693.9 264.1,692.3 262.9,690.6 261.6,689.0 260.3,687.3 259.1,685.6 257.8,684.0 256.5,682.2 255.2,680.5 253.9,678.8 252.5,677.0 251.2,675.2 249.9,673.4 248.5,671.6 247.2,669.8 245.8,667.9 244.4,666.0 243.0,664.1 241.6,662.2 240.2,660.3 238.8,658.3 237.4,656.3 236.0,654.3 234.5,652.3 233.1,650.2 231.6,648.1 230.2,646.0 228.7,643.9 227.2,641.8 225.8,639.6 224.3,637.4 222.8,635.1 221.3,632.9 219.8,630.6 218.3,628.2 216.8,625.9 215.3,623.5 213.8,621.1 212.3,618.6 210.8,616.1 209.2,613.6 207.7,611.0 206.2,608.4 204.7,605.8 203.2,603.1 201.6,600.4 200.1,597.7 198.6,594.9 197.1,592.1 195.6,589.2 194.1,586.2 192.6,583.3 191.1,580.3 189.6,577.2 188.1,574.1 186.6,570.9 185.1,567.7 183.7,564.4 182.2,561.0 180.8,557.6 179.3,554.2 177.9,550.6 176.5,547.0 175.1,543.4 173.8,539.6 172.4,535.8 171.1,532.0 169.8,528.0 168.5,524.0 167.2,519.8 166.0,515.6 164.8,511.3 163.6,506.9 162.5,502.4 161.3,497.8 160.3,493.1 159.2,488.3 158.2,483.4 157.3,478.3 156.3,473.1 155.5,467.8 154.7,462.4 153.9,456.8 153.2,451.1 152.6,445.2 152.1,439.1 151.6,432.9 151.2,426.4 150.9,419.8 150.7,413.0 150.5,406.0 150.5,398.7 150.6,391.2 150.9,383.5 151.2,375.5 151.7,367.2 152.4,358.6 153.2,349.6 154.2,340.4 155.4,330.7 156.9,320.7 158.6,310.2 160.5,299.3 162.7,287.9 165.2,276.0 168.1,263.5 171.3,250.3 175.0,236.5 179.1,221.9 183.8,206.6 189.0,190.3 194.8,173.0 201.4,154.7 208.9,135.1 217.2,114.1 226.7,91.6 237.3,67.3 249.4,41.1" stroke="#000080" stroke-width="1" fill="none" clip-path="url(#cp)"/>
<polyline points="365.3,749.5 364.7,748.4 364.1,747.2 363.5,746.0 362.9,744.8 362.3,743.6 361.7,742.4 361.0,741.2 360.4,740.0 359.7,738.8 359.1,737.5 358.4,736.3 357.7,735.0 357.1,733.8 356.4,732.5 355.7,731.2 355.0,729.9 354.2,728.6 353.5,727.3 352.8,726.0 352.0,724.6 351.3,723.3 350.5,721.9 349.8,720.6 349.0,719.2 348.2,717.8 347.4,716.4 346.6,715.0 345.8,713.6 344.9,712.1 344.1,710.7 343.2,709.2 342.4,707.7 341.5,706.3 340.6,704.8 339.7,703.2 338.8,701.7 337.9,700.2 336.9,698.6 336.0,697.1 335.0,695.5 334.1,693.9 333.1,692.3 332.1,690.6 331.1,689.0 330.0,687.3 329.0,685.6 328.0,684.0 326.9,682.2 325.8,680.5 324.7,678.8 323.6,677.0 322.5,675.2 321.4,673.4 320.2,671.6 319.1,669.8 317.9,667.9 316.7,666.0 315.5,664.1 314.3,662.2 313.0,660.3 311.8,658.3 310.5,656.3 309.2,654.3 308.0,652.3 306.7,650.2 305.3,648.1 304.0,646.0 302.6,643.9 301.3,641.8 299.9,639.6 298.5,637.4 297.1,635.1 295.7,632.9 294.3,630.6 292.8,628.2 291.4,625.9 289.9,623.5 288.4,621.1 286.9,618.6 285.4,616.1 283.9,613.6 282.3,611.0 280.8,608.4 279.3,605.8 277.7,603.1 276.1,600.4 274.6,597.7 273.0,594.9 271.4,592.1 269.8,589.2 268.2,586.2 266.6,583.3 265.0,580.3 263.3,577.2 261.7,574.1 260.1,570.9 258.5,567.7 256.9,564.4 255.2,561.0 253.6,557.6 252.0,554.2 250.4,550.6 248.8,547.0 247.2,543.4 245.6,539.6 244.0,535.8 242.5,532.0 240.9,528.0 239.4,524.0 237.8,519.8 236.3,515.6 234.9,511.3 233.4,506.9 232.0,502.4 230.5,497.8 229.2,493.1 227.8,488.3 226.5,483.4 225.2,478.3 224.0,473.1 222.8,467.8 221.6,462.4 220.5,456.8 219.5,451.1 218.5,445.2 217.5,439.1 216.7,432.9 215.9,426.4 215.2,419.8 214.6,413.0 214.0,406.0 213.6,398.7 213.3,391.2 213.1,383.5 213.0,375.5 213.1,367.2 213.3,358.6 213.6,349.6 214.2,340.4 214.9,330.7 215.8,320.7 217.0,310.2 218.4,299.3 220.1,287.9 222.1,276.0 224.4,263.5 227.0,250.3 230.1,236.5 233.6,221.9 237.6,206.6 242.2,190.3 247.4,173.0 253.3,154.7 260.1,135.1 267.7,114.1 276.4,91.6 286.2,67.3 297.5,41.1 310.5,12.5" stroke="#000080" stroke-width="1" fill="none" clip-path="url(#cp)"/>
<polyline points="423.2,749.5 422.9,748.4 422.6,747.2 422.2,746.0 421.9,744.8 421.5,743.6 421.2,742.4 420.8,741.2 420.5,740.0 420.1,738.8 419.7,737.5 419.4,736.3 419.0,735.0 418.6,733.8 418.2,732.5 417.8,731.2 417.4,729.9 417.0,728.6 416.6,727.3 416.2,726.0 415.8,724.6 415.4,723.3 414.9,721.9 414.5,720.6 414.1,719.2 413.6,717.8 413.2,716.4 412.7,715.0 412.2,713.6 411.8,712.1 411.3,710.7 410.8,709.2 410.3,707.7 409.8,706.3 409.3,704.8 408.8,703.2 408.2,701.7 407.7,700.2 407.2,698.6 406.6,697.1 406.1,695.5 405.5,693.9 404.9,692.3 404.3,690.6 403.7,689.0 403.1,687.3 402.5,685.6 401.9,684.0 401.3,682.2 400.6,680.5 399.9,678.8 399.3,677.0 398.6,675.2 397.9,673.4 397.2,671.6 396.5,669.8 395.7,667.9 395.0,666.0 394.2,664.1 393.5,662.2 392.7,660.3 391.9,658.3 391.1,656.3 390.2,654.3 389.4,652.3 388.5,650.2 387.7,648.1 386.8,646.0 385.9,643.9 384.9,641.8 384.0,639.6 383.0,637.4 382.0,635.1 381.0,632.9 380.0,630.6 379.0,628.2 377.9,625.9 376.9,623.5 375.8,621.1 374.6,618.6 373.5,616.1 372.4,613.6 371.2,611.0 370.0,608.4 368.8,605.8 367.5,603.1 366.3,600.4 365.0,597.7 363.7,594.9 362.3,592.1 361.0,589.2 359.6,586.2 358.2,583.3 356.8,580.3 355.4,577.2 353.9,574.1 352.5,570.9 351.0,567.7 349.5,564.4 347.9,561.0 346.4,557.6 344.8,554.2 343.3,550.6 341.7,547.0 340.1,543.4 338.4,539.6 336.8,535.8 335.2,532.0 333.5,528.0 331.9,524.0 330.2,519.8 328.6,515.6 326.9,511.3 325.2,506.9 323.6,502.4 321.9,497.8 320.3,493.1 318.7,488.3 317.0,483.4 315.5,478.3 313.9,473.1 312.3,467.8 310.8,462.4 309.3,456.8 307.9,451.1 306.5,445.2 305.1,439.1 303.8,432.9 302.6,426.4 301.4,419.8 300.2,413.0 299.2,406.0 298.3,398.7 297.4,391.2 296.6,383.5 296.0,375.5 295.4,367.2 295.0,358.6 294.8,349.6 294.7,340.4 294.8,330.7 295.1,320.7 295.5,310.2 296.2,299.3 297.2,287.9 298.5,276.0 300.0,263.5 301.9,250.3 304.2,236.5 306.9,221.9 310.1,206.6 313.8,190.3 318.1,173.0 323.1,154.7 328.9,135.1 335.5,114.1 343.2,91.6 352.0,67.3 362.2,41.1 374.0,12.5" stroke="#000080" stroke-width="1" fill="none" clip-path="url(#cp)"/>
<polyline points="481.4,749.5 481.3,748.4 481.2,747.2 481.1,746.0 481.0,744.8 480.9,743.6 480.8,742.4 480.7,741.2 480.6,740.0 480.4,738.8 480.3,737.5 480.2,736.3 480.1,735.0 480.0,733.8 479.9,732.5 479.8,731.2 479.6,729.9 479.5,728.6 479.4,727.3 479.3,726.0 479.2,724.6 479.0,723.3 478.9,721.9 478.8,720.6 478.7,719.2 478.5,717.8 478.4,716.4 478.3,715.0 478.1,713.6 478.0,712.1 477.9,710.7 477.7,709.2 477.6,707.7 477.5,706.3 477.3,704.8 477.2,703.2 477.0,701.7 476.9,700.2 476.7,698.6 476.6,697.1 476.4,695.5 476.3,693.9 476.1,692.3 476.0,690.6 475.8,689.0 475.6,687.3 475.5,685.6 475.3,684.0 475.1,682.2 474.9,680.5 474.8,678.8 474.6,677.0 474.4,675.2 474.2,673.4 474.0,671.6 473.8,669.8 473.6,667.9 473.4,666.0 473.2,664.1 473.0,662.2 472.8,660.3 472.6,658.3 472.3,656.3 472.1,654.3 471.9,652.3 471.6,650.2 471.4,648.1 471.1,646.0 470.9,643.9 470.6,641.8 470.3,639.6 470.0,637.4 469.8,635.1 469.5,632.9 469.2,630.6 468.8,628.2 468.5,625.9 468.2,623.5 467.9,621.1 467.5,618.6 467.2,616.1 466.8,613.6 466.4,611.0 466.0,608.4 465.6,605.8 465.2,603.1 464.8,600.4 464.3,597.7 463.9,594.9 463.4,592.1 462.9,589.2 462.4,586.2 461.9,583.3 461.3,580.3 460.8,577.2 460.2,574.1 459.6,570.9 459.0,567.7 458.3,564.4 457.7,561.0 457.0,557.6 456.3,554.2 455.5,550.6 454.8,547.0 454.0,543.4 453.1,539.6 452.3,535.8 451.4,532.0 450.5,528.0 449.6,524.0 448.6,519.8 447.6,515.6 446.6,511.3 445.5,506.9 444.4,502.4 443.3,497.8 442.1,493.1 440.9,488.3 439.7,483.4 438.4,478.3 437.1,473.1 435.8,467.8 434.5,462.4 433.1,456.8 431.8,451.1 430.4,445.2 429.0,439.1 427.6,432.9 426.2,426.4 424.7,419.8 423.4,413.0 422.0,406.0 420.6,398.7 419.3,391.2 418.1,383.5 416.9,375.5 415.7,367.2 414.7,358.6 413.7,349.6 412.9,340.4 412.2,330.7 411.6,320.7 411.2,310.2 411.0,299.3 411.0,287.9 411.2,276.0 411.7,263.5 412.5,250.3 413.7,236.5 415.2,221.9 417.2,206.6 419.6,190.3 422.7,173.0 426.3,154.7 430.7,135.1 435.9,114.1 442.0,91.6 449.3,67.3 457.8,41.1 467.9,12.5" stroke="#000080" stroke-width="1" fill="none" clip-path="url(#cp)"/>
<polyline points="540.1,749.5 540.1,748.4 540.2,747.2 540.3,746.0 540.3,744.8 540.4,743.6 540.5,742.4 540.5,741.2 540.6,740.0 540.7,738.8 540.8,737.5 540.9,736.3 540.9,735.0 541.0,733.8 541.1,732.5 541.2,731.2 541.3,729.9 541.4,728.6 541.5,727.3 541.6,726.0 541.7,724.6 541.8,723.3 541.9,721.9 542.0,720.6 542.1,719.2 542.2,717.8 542.3,716.4 542.4,715.0 542.5,713.6 542.6,712.1 542.8,710.7 542.9,709.2 543.0,707.7 543.1,706.3 543.3,704.8 543.4,703.2 543.5,701.7 543.7,700.2 543.8,698.6 544.0,697.1 544.1,695.5 544.3,693.9 544.4,692.3 544.6,690.6 544.7,689.0 544.9,687.3 545.1,685.6 545.2,684.0 545.4,682.2 545.6,680.5 545.8,678.8 545.9,677.0 546.1,675.2 546.3,673.4 546.5,671.6 546.7,669.8 546.9,667.9 547.1,666.0 547.3,664.1 547.6,662.2 547.8,660.3 548.0,658.3 548.2,656.3 548.5,654.3 548.7,652.3 548.9,650.2 549.2,648.1 549.5,646.0 549.7,643.9 550.0,641.8 550.2,639.6 550.5,637.4 550.8,635.1 551.1,632.9 551.4,630.6 551.7,628.2 552.0,625.9 552.3,623.5 552.6,621.1 552.9,618.6 553.3,616.1 553.6,613.6 553.9,611.0 554.3,608.4 554.6,605.8 555.0,603.1 555.4,600.4 555.8,597.7 556.1,594.9 556.5,592.1 556.9,589.2 557.3,586.2 557.8,583.3 558.2,580.3 558.6,577.2 559.1,574.1 559.5,570.9 560.0,567.7 560.4,564.4 560.9,561.0 561.4,557.6 561.9,554.2 562.4,550.6 562.9,547.0 563.4,543.4 563.9,539.6 564.5,535.8 565.0,532.0 565.6,528.0 566.1,524.0 566.7,519.8 567.3,515.6 567.8,511.3 568.4,506.9 569.0,502.4 569.6,497.8 570.2,493.1 570.9,488.3 571.5,483.4 572.1,478.3 572.7,473.1 573.3,467.8 574.0,462.4 574.6,456.8 575.2,451.1 575.8,445.2 576.5,439.1 577.1,432.9 577.7,426.4 578.3,419.8 578.8,413.0 579.4,406.0 579.9,398.7 580.4,391.2 580.9,383.5 581.4,375.5 581.8,367.2 582.3,358.6 582.6,349.6 583.0,340.4 583.3,330.7 583.6,320.7 583.9,310.2 584.2,299.3 584.5,287.9 584.8,276.0 585.1,263.5 585.5,250.3 586.1,236.5 586.8,221.9 587.7,206.6 588.9,190.3 590.5,173.0 592.4,154.7 594.9,135.1 598.1,114.1 602.0,91.6 606.9,67.3 612.9,41.1 620.3,12.5" stroke="#000080" stroke-width="1" fill="none" clip-path="url(#cp)"/>
<polyline points="599.2,749.5 599.4,748.4 599.5,747.2 599.7,746.0 599.9,744.8 600.1,743.6 600.3,742.4 600.5,741.2 600.7,740.0 600.9,738.8 601.1,737.5 601.3,736.3 601.5,735.0 601.7,733.8 601.9,732.5 602.1,731.2 602.3,729.9 602.6,728.6 602.8,727.3 603.0,726.0 603.3,724.6 603.5,723.3 603.7,721.9 604.0,720.6 604.2,719.2 604.5,717.8 604.8,716.4 605.0,715.0 605.3,713.6 605.6,712.1 605.8,710.7 606.1,709.2 606.4,707.7 606.7,706.3 607.0,704.8 607.3,703.2 607.6,701.7 607.9,700.2 608.3,698.6 608.6,697.1 608.9,695.5 609.2,693.9 609.6,692.3 609.9,690.6 610.3,689.0 610.7,687.3 611.0,685.6 611.4,684.0 611.8,682.2 612.2,680.5 612.6,678.8 613.0,677.0 613.4,675.2 613.8,673.4 614.2,671.6 614.7,669.8 615.1,667.9 615.6,666.0 616.0,664.1 616.5,662.2 617.0,660.3 617.5,658.3 618.0,656.3 618.5,654.3 619.0,652.3 619.5,650.2 620.0,648.1 620.6,646.0 621.2,643.9 621.7,641.8 622.3,639.6 622.9,637.4 623.5,635.1 624.1,632.9 624.8,630.6 625.4,628.2 626.1,625.9 626.8,623.5 627.4,621.1 628.1,618.6 628.9,616.1 629.6,613.6 630.4,611.0 631.1,608.4 631.9,605.8 632.7,603.1 633.5,600.4 634.4,597.7 635.2,594.9 636.1,592.1 637.0,589.2 637.9,586.2 638.9,583.3 639.8,580.3 640.8,577.2 641.9,574.1 642.9,570.9 644.0,567.7 645.1,564.4 646.2,561.0 647.3,557.6 648.5,554.2 649.7,550.6 651.0,547.0 652.2,543.4 653.5,539.6 654.9,535.8 656.3,532.0 657.7,528.0 659.1,524.0 660.7,519.8 662.2,515.6 663.8,511.3 665.4,506.9 667.1,502.4 668.8,497.8 670.6,493.1 672.5,488.3 674.4,483.4 676.3,478.3 678.3,473.1 680.4,467.8 682.6,462.4 684.8,456.8 687.1,451.1 689.5,445.2 692.0,439.1 694.5,432.9 697.1,426.4 699.9,419.8 702.7,413.0 705.6,406.0 708.7,398.7 711.9,391.2 715.1,383.5 718.6,375.5 722.1,367.2 725.8,358.6 729.7,349.6 733.7,340.4 737.8,330.7 742.2,320.7 746.8,310.2 751.5,299.3 756.5,287.9 761.7,276.0 767.2,263.5 772.9,250.3 778.9,236.5 785.1,221.9 791.7,206.6 798.6,190.3 805.9,173.0 813.5,154.7 821.4,135.1 829.8,114.1 838.6,91.6 847.8,67.3 857.4,41.1 867.6,12.5" stroke="#000080" stroke-width="1" fill="none" clip-path="url(#cp)"/>
<polyline points="658.7,749.5 658.9,748.4 659.2,747.2 659.4,746.0 659.7,744.8 659.9,743.6 660.2,742.4 660.4,741.2 660.7,740.0 660.9,738.8 661.2,737.5 661.5,736.3 661.8,735.0 662.0,733.8 662.3,732.5 662.6,731.2 662.9,729.9 663.2,728.6 663.5,727.3 663.8,726.0 664.1,724.6 664.4,723.3 664.8,721.9 665.1,720.6 665.4,719.2 665.8,717.8 666.1,716.4 666.5,715.0 666.8,713.6 667.2,712.1 667.5,710.7 667.9,709.2 668.3,707.7 668.7,706.3 669.1,704.8 669.4,703.2 669.8,701.7 670.3,700.2 670.7,698.6 671.1,697.1 671.5,695.5 672.0,693.9 672.4,692.3 672.9,690.6 673.3,689.0 673.8,687.3 674.3,685.6 674.7,684.0 675.2,682.2 675.7,680.5 676.2,678.8 676.8,677.0 677.3,675.2 677.8,673.4 678.4,671.6 678.9,669.8 679.5,667.9 680.1,666.0 680.7,664.1 681.3,662.2 681.9,660.3 682.5,658.3 683.1,656.3 683.8,654.3 684.4,652.3 685.1,650.2 685.8,648.1 686.5,646.0 687.2,643.9 687.9,641.8 688.6,639.6 689.4,637.4 690.2,635.1 690.9,632.9 691.7,630.6 692.6,628.2 693.4,625.9 694.2,623.5 695.1,621.1 696.0,618.6 696.9,616.1 697.8,613.6 698.8,611.0 699.7,608.4 700.7,605.8 701.7,603.1 702.8,600.4 703.8,597.7 704.9,594.9 706.0,592.1 707.2,589.2 708.3,586.2 709.5,583.3 710.7,580.3 712.0,577.2 713.2,574.1 714.5,570.9 715.9,567.7 717.2,564.4 718.7,561.0 720.1,557.6 721.6,554.2 723.1,550.6 724.7,547.0 726.3,543.4 727.9,539.6 729.6,535.8 731.3,532.0 733.1,528.0 735.0,524.0 736.8,519.8 738.8,515.6 740.8,511.3 742.9,506.9 745.0,502.4 747.2,497.8 749.4,493.1 751.8,488.3 754.2,483.4 756.6,478.3 759.2,473.1 761.9,467.8 764.6,462.4 767.4,456.8 770.4,451.1 773.4,445.2 776.6,439.1 779.8,432.9 783.2,426.4 786.7,419.8 790.4,413.0 794.2,406.0 798.1,398.7 802.3,391.2 806.6,383.5 811.0,375.5 815.7,367.2 820.6,358.6 825.7,349.6 831.1,340.4 836.7,330.7 842.6,320.7 848.8,310.2 855.3,299.3 862.1,287.9 869.4,276.0 877.1,263.5 885.2,250.3 893.8,236.5 902.9,221.9 912.6,206.6 923.0,190.3 934.1,173.0 946.0,154.7 958.9,135.1 972.7,114.1 987.7,91.6 1004.0,67.3 1021.7,41.1 1041.2,12.5" stroke="#000080" stroke-width="1" fill="none" clip-path="url(#cp)"/>
<line x1="-667.5" y1="749.5" x2="31.5" y2="50.5" stroke="#ffffff" stroke-width="1" clip-path="url(#cp)"/>
<line x1="-607.5" y1="749.5" x2="91.5" y2="50.5" stroke="#ffffff" stroke-width="1" clip-path="url(#cp)"/>
<line x1="-547.5" y1="749.5" x2="151.5" y2="50.5" stroke="#ffffff" stroke-width="1" clip-path="url(#cp)"/>
<line x1="-487.5" y1="749.5" x2="211.5" y2="50.5" stroke="#ffffff" stroke-width="1" clip-path="url(#cp)"/>
<line x1="-427.5" y1="749.5" x2="271.5" y2="50.5" stroke="#ffffff" stroke-width="1" clip-path="url(#cp)"/>
<line x1="-367.5" y1="749.5" x2="331.5" y2="50.5" stroke="#ffffff" stroke-width="1" clip-path="url(#cp)"/>
<line x1="-307.5" y1="749.5" x2="391.5" y2="50.5" stroke="#ffffff" stroke-width="1" clip-path="url(#cp)"/>
<line x1="-247.5" y1="749.5" x2="451.5" y2="50.5" stroke="#ffffff" stroke-width="1" clip-path="url(#cp)"/>
<line x1="-187.5" y1="749.5" x2="511.5" y2="50.5" stroke="#ffffff" stroke-width="1" clip-path="url(#cp)"/>
<line x1="-127.5" y1="749.5" x2="571.5" y2="50.5" stroke="#ffffff" stroke-width="1" clip-path="url(#cp)"/>
<line x1="-67.5" y1="749.5" x2="631.5" y2="50.5" stroke="#ffffff" stroke-width="1" clip-path="url(#cp)"/>
<line x1="-7.5" y1="749.5" x2="691.5" y2="50.5" stroke="#ffffff" stroke-width="1" clip-path="url(#cp)"/>
<line x1="52.5" y1="749.5" x2="751.5" y2="50.5" stroke="#ffffff" stroke-width="1" clip-path="url(#cp)"/>
<line x1="112.5" y1="749.5" x2="811.5" y2="50.5" stroke="#ffffff" stroke-width="1" clip-path="url(#cp)"/>
<line x1="172.5" y1="749.5" x2="871.5" y2="50.5" stroke="#ffffff" stroke-width="1" clip-path="url(#cp)"/>
<line x1="232.5" y1="749.5" x2="931.5" y2="50.5" stroke="#ffffff" stroke-width="1" clip-path="url(#cp)"/>
<line x1="292.5" y1="749.5" x2="991.5" y2="50.5" stroke="#ffffff" stroke-width="1" clip-path="url(#cp)"/>
<line x1="352.5" y1="749.5" x2="1051.5" y2="50.5" stroke="#ffffff" stroke-width="1" clip-path="url(#cp)"/>
<line x1="412.5" y1="749.5" x2="1111.5" y2="50.5" stroke="#ffffff" stroke-width="1" clip-path="url(#cp)"/>
<line x1="472.5" y1="749.5" x2="1171.5" y2="50.5" stroke="#ffffff" stroke-width="1" clip-path="url(#cp)"/>
<line x1="532.5" y1="749.5" x2="1231.5" y2="50.5" stroke="#ffffff" stroke-width="1" clip-path="url(#cp)"/>
<line x1="592.5" y1="749.5" x2="1291.5" y2="50.5" stroke="#ffffff" stroke-width="1" clip-path="url(#cp)"/>
<line x1="652.5" y1="749.5" x2="1351.5" y2="50.5" stroke="#ffffff" stroke-width="1" clip-path="url(#cp)"/>
<line x1="56" y1="50.5" x2="667" y2="50.5" stroke="#ffffff" stroke-width="1" />
<line x1="56" y1="321.5" x2="661.5" y2="321.5" stroke="#ffffff" stroke-width="1" />
<line x1="56" y1="449.5" x2="661.5" y2="449.5" stroke="#ffffff" stroke-width="1" />
<line x1="56" y1="529.5" x2="661.5" y2="529.5" stroke="#ffffff" stroke-width="1" />
<line x1="56" y1="586.5" x2="661.5" y2="586.5" stroke="#ffffff" stroke-width="1" />
<line x1="56" y1="630.5" x2="661.5" y2="630.5" stroke="#ffffff" stroke-width="1" />
<line x1="56" y1="665.5" x2="661.5" y2="665.5" stroke="#ffffff" stroke-width="1" />
<line x1="56" y1="694.5" x2="661.5" y2="694.5" stroke="#ffffff" stroke-width="1" />
<line x1="56" y1="719.5" x2="661.5" y2="719.5" stroke="#ffffff" stroke-width="1" />
<line x1="56" y1="740.5" x2="661.5" y2="740.5" stroke="#ffffff" stroke-width="1" />
<line x1="61.5" y1="50" x2="61.5" y2="755" stroke="#ffffff" stroke-width="1" />
<line x1="661.5" y1="50" x2="661.5" y2="750" stroke="#ffffff" stroke-width="1" />
<line x1="61" y1="749.5" x2="662" y2="749.5" stroke="#ffffff" stroke-width="1" />
<line x1="661" y1="321.5" x2="667" y2="321.5" stroke="#ffffff" stroke-width="1" />
<line x1="661" y1="449.5" x2="667" y2="449.5" stroke="#ffffff" stroke-width="1" />
<line x1="661" y1="529.5" x2="667" y2="529.5" stroke="#ffffff" stroke-width="1" />
<line x1="661" y1="586.5" x2="667" y2="586.5" stroke="#ffffff" stroke-width="1" />
<line x1="661" y1="630.5" x2="667" y2="630.5" stroke="#ffffff" stroke-width="1" />
<line x1="661" y1="665.5" x2="667" y2="665.5" stroke="#ffffff" stroke-width="1" />
<line x1="661" y1="694.5" x2="667" y2="694.5" stroke="#ffffff" stroke-width="1" />
<line x1="661" y1="719.5" x2="667" y2="719.5" stroke="#ffffff" stroke-width="1" />
<line x1="61" y1="682.5" x2="625" y2="682.5" stroke="#ff00ff" stroke-width="1" />
<rect x="625.5" y="673.5" width="30" height="17" fill="#000" stroke="#ff00ff" stroke-width="1"/>
<polyline points="61.0,665.4 139.0,670.5 162.5,671.7 235.7,681.5 263.0,685.0 312.0,697.1 367.6,706.4 375.7,713.7 385.2,720.7 393.3,726.9 424.0,731.0 458.0,734.5 487.6,734.6 502.0,735.7" stroke="#ffff00" stroke-width="1" fill="none" />
<polyline points="61.0,666.8 80.5,685.0 98.0,696.9 108.3,705.6 120.0,713.0 131.7,720.3 153.7,726.9 165.4,730.2 189.6,733.5 210.8,735.0 225.4,736.4" stroke="#e87800" stroke-width="1" fill="none" />
<polyline points="212.5,736.5 217.0,731.0 221.0,726.5 225.5,720.0 229.5,713.5 233.5,706.5 243.5,697.5 244.4,689.3 246.5,683.0 248.0,672.0 250.5,662.5" stroke="#c8c800" stroke-width="1" fill="none" />
<polyline points="150.8,50.0 196.0,218.0 190.0,240.0 187.0,252.7 166.7,319.6 167.4,331.0 169.6,386.6 171.0,394.0 171.7,492.8 151.5,543.3 142.0,560.5 126.5,586.3 119.7,595.0 110.5,606.4 109.4,624.8 110.5,630.4 109.4,635.0 105.7,654.0 101.7,664.6 98.4,671.7 96.6,685.0 90.0,697.6 122.2,706.4 115.6,713.0 109.8,719.5 109.0,729.0 109.0,733.0 110.5,738.0" stroke="#ff0080" stroke-width="1" fill="none" />
<polyline points="199.5,50.0 265.0,218.0 262.6,230.0 236.0,319.6 234.6,326.0 240.0,379.0 241.4,394.0 241.4,492.8 228.5,530.7 210.9,561.0 193.0,586.3 169.2,610.2 163.0,631.7 150.8,648.0 145.7,665.4 139.8,671.2 134.0,685.0 127.6,696.9 108.3,705.0 103.2,706.4 97.3,713.0 90.7,720.0 85.6,727.6 85.6,738.0" stroke="#00ff00" stroke-width="1" fill="none" />
<polyline points="660.5,86.5 431.5,320.5 417.0,385.0 415.0,394.0 418.0,449.0 424.5,493.5 433.0,529.0 440.5,560.0 448.0,586.0 453.6,610.5 467.9,629.8 471.0,648.5 488.6,666.4 505.5,684.5 517.0,697.5 528.0,707.0 537.5,714.5 546.0,720.5 558.0,728.5 561.0,735.0" stroke="#ff0000" stroke-width="1" fill="none" />
<polyline points="573.3,50.0 451.0,218.0 447.0,240.0 437.8,280.0 434.5,300.0 430.8,321.0 417.0,385.0 415.0,394.0 415.0,449.0 412.5,493.5 416.2,529.0 413.5,560.0 412.5,586.0 414.0,610.0 417.0,630.0 410.0,648.0 420.0,665.0 456.4,671.0 462.8,684.5 464.6,697.4 465.8,706.7 462.2,713.8 460.0,720.2 458.7,727.8 458.0,733.0 462.0,736.0" stroke="#00ffff" stroke-width="1" fill="none" />
<polyline points="477.0,50.0 466.8,96.8 456.3,130.5 449.0,166.3 443.7,198.0 439.5,238.0 437.8,280.0 439.0,321.0 447.3,394.0 456.7,449.0 465.0,493.0 473.5,529.0 481.0,586.0 484.0,620.0 486.8,640.0 488.6,682.7" stroke="#ff00ff" stroke-width="1" fill="none" />
<polyline points="488.6,682.7 566.0,736.0" stroke="#ff00ff" stroke-width="1" fill="none" />
<polyline points="488.6,682.7 458.7,736.6" stroke="#ff00ff" stroke-width="1" fill="none" />
<polyline points="490.0,50.0 481.6,82.0 473.0,109.5 464.7,151.6 458.4,185.0 454.0,221.0 453.0,240.0 452.6,280.0 453.9,321.0 461.5,394.0 472.3,449.0 478.0,493.0 485.7,529.0 491.0,586.0 493.0,620.0 494.0,640.0 495.6,671.6" stroke="#ffc4ff" stroke-width="1" fill="none" />
<polyline points="495.6,671.6 587.5,736.0" stroke="#ffc4ff" stroke-width="1" fill="none" />
<polyline points="495.6,671.6 489.0,683.0" stroke="#ffc4ff" stroke-width="1" fill="none" />
<path d="M194,218.5h5M196.5,217v3" stroke="#fff" stroke-width="1"/>
<path d="M169,394.5h5M171.5,393v3" stroke="#fff" stroke-width="1"/>
<path d="M170,493.5h5M172.5,492v3" stroke="#fff" stroke-width="1"/>
<path d="M140,560.5h5M142.5,559v3" stroke="#fff" stroke-width="1"/>
<path d="M124,586.5h5M126.5,585v3" stroke="#fff" stroke-width="1"/>
<path d="M97,671.5h5M99.5,670v3" stroke="#fff" stroke-width="1"/>
<path d="M95,685.5h5M97.5,684v3" stroke="#fff" stroke-width="1"/>
<path d="M88,697.5h5M90.5,696v3" stroke="#fff" stroke-width="1"/>
<path d="M119,706.5h5M121.5,705v3" stroke="#fff" stroke-width="1"/>
<path d="M114,713.5h5M116.5,712v3" stroke="#fff" stroke-width="1"/>
<path d="M108,720.5h5M110.5,719v3" stroke="#fff" stroke-width="1"/>
<path d="M107,725.5h5M109.5,724v3" stroke="#fff" stroke-width="1"/>
<path d="M107,728.5h5M109.5,727v3" stroke="#fff" stroke-width="1"/>
<path d="M107,731.5h5M109.5,730v3" stroke="#fff" stroke-width="1"/>
<path d="M107,734.5h5M109.5,733v3" stroke="#fff" stroke-width="1"/>
<path d="M108,737.5h5M110.5,736v3" stroke="#fff" stroke-width="1"/>
<path d="M263,218.5h5M265.5,217v3" stroke="#fff" stroke-width="1"/>
<path d="M239,394.5h5M241.5,393v3" stroke="#fff" stroke-width="1"/>
<path d="M239,493.5h5M241.5,492v3" stroke="#fff" stroke-width="1"/>
<path d="M209,560.5h5M211.5,559v3" stroke="#fff" stroke-width="1"/>
<path d="M191,586.5h5M193.5,585v3" stroke="#fff" stroke-width="1"/>
<path d="M167,610.5h5M169.5,609v3" stroke="#fff" stroke-width="1"/>
<path d="M149,648.5h5M151.5,647v3" stroke="#fff" stroke-width="1"/>
<path d="M138,671.5h5M140.5,670v3" stroke="#fff" stroke-width="1"/>
<path d="M132,685.5h5M134.5,684v3" stroke="#fff" stroke-width="1"/>
<path d="M125,697.5h5M127.5,696v3" stroke="#fff" stroke-width="1"/>
<path d="M103,706.5h5M105.5,705v3" stroke="#fff" stroke-width="1"/>
<path d="M95,713.5h5M97.5,712v3" stroke="#fff" stroke-width="1"/>
<path d="M89,720.5h5M91.5,719v3" stroke="#fff" stroke-width="1"/>
<path d="M85,725.5h5M87.5,724v3" stroke="#fff" stroke-width="1"/>
<path d="M84,728.5h5M86.5,727v3" stroke="#fff" stroke-width="1"/>
<path d="M84,731.5h5M86.5,730v3" stroke="#fff" stroke-width="1"/>
<path d="M84,734.5h5M86.5,733v3" stroke="#fff" stroke-width="1"/>
<path d="M84,737.5h5M86.5,736v3" stroke="#fff" stroke-width="1"/>
<path d="M526,218.5h5M528.5,217v3" stroke="#fff" stroke-width="1"/>
<path d="M413,394.5h5M415.5,393v3" stroke="#fff" stroke-width="1"/>
<path d="M422,494.5h5M424.5,493v3" stroke="#fff" stroke-width="1"/>
<path d="M438,560.5h5M440.5,559v3" stroke="#fff" stroke-width="1"/>
<path d="M452,610.5h5M454.5,609v3" stroke="#fff" stroke-width="1"/>
<path d="M469,648.5h5M471.5,647v3" stroke="#fff" stroke-width="1"/>
<path d="M504,684.5h5M506.5,683v3" stroke="#fff" stroke-width="1"/>
<path d="M515,698.5h5M517.5,697v3" stroke="#fff" stroke-width="1"/>
<path d="M526,707.5h5M528.5,706v3" stroke="#fff" stroke-width="1"/>
<path d="M536,714.5h5M538.5,713v3" stroke="#fff" stroke-width="1"/>
<path d="M544,720.5h5M546.5,719v3" stroke="#fff" stroke-width="1"/>
<path d="M556,728.5h5M558.5,727v3" stroke="#fff" stroke-width="1"/>
<path d="M559,735.5h5M561.5,734v3" stroke="#fff" stroke-width="1"/>
<path d="M449,218.5h5M451.5,217v3" stroke="#fff" stroke-width="1"/>
<path d="M413,394.5h5M415.5,393v3" stroke="#fff" stroke-width="1"/>
<path d="M410,494.5h5M412.5,493v3" stroke="#fff" stroke-width="1"/>
<path d="M412,560.5h5M414.5,559v3" stroke="#fff" stroke-width="1"/>
<path d="M410,610.5h5M412.5,609v3" stroke="#fff" stroke-width="1"/>
<path d="M408,648.5h5M410.5,647v3" stroke="#fff" stroke-width="1"/>
<path d="M454,671.5h5M456.5,670v3" stroke="#fff" stroke-width="1"/>
<path d="M461,684.5h5M463.5,683v3" stroke="#fff" stroke-width="1"/>
<path d="M463,697.5h5M465.5,696v3" stroke="#fff" stroke-width="1"/>
<path d="M464,707.5h5M466.5,706v3" stroke="#fff" stroke-width="1"/>
<path d="M460,714.5h5M462.5,713v3" stroke="#fff" stroke-width="1"/>
<path d="M458,720.5h5M460.5,719v3" stroke="#fff" stroke-width="1"/>
<path d="M457,728.5h5M459.5,727v3" stroke="#fff" stroke-width="1"/>
<path d="M460,735.5h5M462.5,734v3" stroke="#fff" stroke-width="1"/>
<path d="M137,670.5h5M139.5,669v3" stroke="#fff" stroke-width="1"/>
<path d="M160,672.5h5M162.5,671v3" stroke="#fff" stroke-width="1"/>
<path d="M261,685.5h5M263.5,684v3" stroke="#fff" stroke-width="1"/>
<path d="M310,697.5h5M312.5,696v3" stroke="#fff" stroke-width="1"/>
<path d="M366,706.5h5M368.5,705v3" stroke="#fff" stroke-width="1"/>
<path d="M374,714.5h5M376.5,713v3" stroke="#fff" stroke-width="1"/>
<path d="M383,721.5h5M385.5,720v3" stroke="#fff" stroke-width="1"/>
<path d="M391,727.5h5M393.5,726v3" stroke="#fff" stroke-width="1"/>
<path d="M422,731.5h5M424.5,730v3" stroke="#fff" stroke-width="1"/>
<path d="M486,735.5h5M488.5,734v3" stroke="#fff" stroke-width="1"/>
<path d="M500,736.5h5M502.5,735v3" stroke="#fff" stroke-width="1"/>
<path d="M78,685.5h5M80.5,684v3" stroke="#fff" stroke-width="1"/>
<path d="M96,697.5h5M98.5,696v3" stroke="#fff" stroke-width="1"/>
<path d="M106,706.5h5M108.5,705v3" stroke="#fff" stroke-width="1"/>
<path d="M118,713.5h5M120.5,712v3" stroke="#fff" stroke-width="1"/>
<path d="M130,720.5h5M132.5,719v3" stroke="#fff" stroke-width="1"/>
<path d="M152,727.5h5M154.5,726v3" stroke="#fff" stroke-width="1"/>
<path d="M163,730.5h5M165.5,729v3" stroke="#fff" stroke-width="1"/>
<path d="M188,734.5h5M190.5,733v3" stroke="#fff" stroke-width="1"/>
<path d="M223,736.5h5M225.5,735v3" stroke="#fff" stroke-width="1"/>
<path d="M232,706.5h5M234.5,705v3" stroke="#fff" stroke-width="1"/>
<path d="M242,698.5h5M244.5,697v3" stroke="#fff" stroke-width="1"/>
<path d="M246,672.5h5M248.5,671v3" stroke="#fff" stroke-width="1"/>
<path d="M211,733l4,4M215,733l-4,4" stroke="#fff" stroke-width="1"/>
<path d="M214,729l4,4M218,729l-4,4" stroke="#fff" stroke-width="1"/>
<path d="M217,726l4,4M221,726l-4,4" stroke="#fff" stroke-width="1"/>
<path d="M220,722l4,4M224,722l-4,4" stroke="#fff" stroke-width="1"/>
<rect x="226" y="710" width="8" height="8" fill="#c8c800"/>
<text x="230" y="717" font-family="Liberation Sans" font-size="9" fill="#3c3800" text-anchor="middle">1</text>
<rect x="240" y="685" width="8" height="8" fill="#c8c800"/>
<text x="244" y="693" font-family="Liberation Sans" font-size="9" fill="#3c3800" text-anchor="middle">2</text>
<rect x="246" y="658" width="8" height="8" fill="#c8c800"/>
<text x="250" y="666" font-family="Liberation Sans" font-size="9" fill="#3c3800" text-anchor="middle">3</text>
<rect x="67.5" y="607.5" width="43" height="17" fill="#000" stroke="#ffff00"/>
<rect x="67.5" y="636.5" width="57" height="17" fill="#000" stroke="#e87800"/>
<line x1="761.5" y1="40" x2="761.5" y2="770" stroke="#00ff00" stroke-width="1" />
<line x1="826.5" y1="40" x2="826.5" y2="770" stroke="#ff0080" stroke-width="1" />
<line x1="761" y1="218.4" x2="733" y2="212" stroke="#ffffff" stroke-width="1" />
<line x1="826" y1="218.4" x2="798" y2="209.6" stroke="#ffffff" stroke-width="1" />
<line x1="761" y1="321.5" x2="732" y2="326" stroke="#ffffff" stroke-width="1" />
<line x1="826" y1="321.5" x2="798" y2="330" stroke="#ffffff" stroke-width="1" />
<line x1="761" y1="394.4" x2="732" y2="392.5" stroke="#ffffff" stroke-width="1" />
<line x1="826" y1="394.4" x2="797" y2="391" stroke="#ffffff" stroke-width="1" />
<line x1="761" y1="449.3" x2="732" y2="444.5" stroke="#ffffff" stroke-width="1" />
<line x1="826" y1="449.3" x2="798" y2="442" stroke="#ffffff" stroke-width="1" />
<line x1="761" y1="493.5" x2="732" y2="488.5" stroke="#ffffff" stroke-width="1" />
<line x1="826" y1="493.5" x2="798" y2="486" stroke="#ffffff" stroke-width="1" />
<line x1="761" y1="529.4" x2="732" y2="529" stroke="#ffffff" stroke-width="1" />
<line x1="826" y1="529.4" x2="797" y2="528.7" stroke="#ffffff" stroke-width="1" />
<line x1="761" y1="560.5" x2="732" y2="564.6" stroke="#ffffff" stroke-width="1" />
<line x1="826" y1="560.5" x2="798" y2="568.3" stroke="#ffffff" stroke-width="1" />
<line x1="761" y1="586.5" x2="733" y2="593" stroke="#ffffff" stroke-width="1" />
<line x1="826" y1="586.5" x2="800" y2="600" stroke="#ffffff" stroke-width="1" />
<line x1="761" y1="610.5" x2="733" y2="618.5" stroke="#ffffff" stroke-width="1" />
<line x1="826" y1="610.5" x2="806" y2="631" stroke="#ffffff" stroke-width="1" />
<line x1="761" y1="630.4" x2="734" y2="642" stroke="#ffffff" stroke-width="1" />
<line x1="826" y1="630.4" x2="813" y2="655" stroke="#ffffff" stroke-width="1" />
<line x1="761" y1="649" x2="736" y2="662" stroke="#ffffff" stroke-width="1" />
<line x1="826" y1="649" x2="818" y2="676" stroke="#ffffff" stroke-width="1" />
<line x1="761" y1="665.7" x2="735" y2="678.5" stroke="#ffffff" stroke-width="1" />
<line x1="826" y1="665.7" x2="820.8" y2="676.8" stroke="#ffffff" stroke-width="1" />
<line x1="761" y1="671.7" x2="736" y2="684.7" stroke="#ffffff" stroke-width="1" />
<line x1="826" y1="671.7" x2="823.5" y2="694" stroke="#ffffff" stroke-width="1" />
<line x1="761" y1="685" x2="735" y2="698" stroke="#ffffff" stroke-width="1" />
<line x1="826" y1="685" x2="824" y2="700" stroke="#ffffff" stroke-width="1" />
<line x1="761" y1="697.8" x2="734" y2="708.6" stroke="#ffffff" stroke-width="1" />
<line x1="826" y1="697.8" x2="824" y2="705" stroke="#ffffff" stroke-width="1" />
<line x1="761" y1="704" x2="738" y2="730" stroke="#ffffff" stroke-width="1" />
<line x1="761" y1="710" x2="738" y2="730" stroke="#ffffff" stroke-width="1" />
<line x1="761" y1="716" x2="738" y2="730" stroke="#ffffff" stroke-width="1" />
<line x1="761" y1="722" x2="738" y2="730" stroke="#ffffff" stroke-width="1" />
<line x1="761" y1="728" x2="738" y2="730" stroke="#ffffff" stroke-width="1" />
<line x1="761" y1="734" x2="738" y2="730" stroke="#ffffff" stroke-width="1" />
<line x1="761" y1="738" x2="738" y2="730" stroke="#ffffff" stroke-width="1" />
<line x1="826" y1="704" x2="855" y2="732" stroke="#ffffff" stroke-width="1" />
<line x1="826" y1="710" x2="855" y2="732" stroke="#ffffff" stroke-width="1" />
<line x1="826" y1="716" x2="855" y2="732" stroke="#ffffff" stroke-width="1" />
<line x1="826" y1="722" x2="855" y2="732" stroke="#ffffff" stroke-width="1" />
<line x1="826" y1="728" x2="855" y2="732" stroke="#ffffff" stroke-width="1" />
<line x1="826" y1="734" x2="855" y2="732" stroke="#ffffff" stroke-width="1" />
<line x1="826" y1="738" x2="855" y2="732" stroke="#ffffff" stroke-width="1" />
<line x1="738" y1="726" x2="733" y2="727" stroke="#ffffff" stroke-width="1" />
<line x1="738" y1="730" x2="733" y2="727" stroke="#ffffff" stroke-width="1" />
<line x1="738" y1="734" x2="733" y2="727" stroke="#ffffff" stroke-width="1" />
<line x1="61.5" y1="749" x2="61.5" y2="755" stroke="#fff" stroke-width="1" />
<line x1="121.5" y1="749" x2="121.5" y2="755" stroke="#fff" stroke-width="1" />
<line x1="181.5" y1="749" x2="181.5" y2="755" stroke="#fff" stroke-width="1" />
<line x1="241.5" y1="749" x2="241.5" y2="755" stroke="#fff" stroke-width="1" />
<line x1="301.5" y1="749" x2="301.5" y2="755" stroke="#fff" stroke-width="1" />
<line x1="361.5" y1="749" x2="361.5" y2="755" stroke="#fff" stroke-width="1" />
<line x1="421.5" y1="749" x2="421.5" y2="755" stroke="#fff" stroke-width="1" />
<line x1="481.5" y1="749" x2="481.5" y2="755" stroke="#fff" stroke-width="1" />
<line x1="541.5" y1="749" x2="541.5" y2="755" stroke="#fff" stroke-width="1" />
<line x1="601.5" y1="749" x2="601.5" y2="755" stroke="#fff" stroke-width="1" />
<line x1="661.5" y1="749" x2="661.5" y2="755" stroke="#fff" stroke-width="1" />
<line x1="61.5" y1="788" x2="61.5" y2="792" stroke="#fff" stroke-width="1" />
<line x1="61.5" y1="827" x2="61.5" y2="831" stroke="#fff" stroke-width="1" />
<line x1="121.5" y1="788" x2="121.5" y2="792" stroke="#fff" stroke-width="1" />
<line x1="121.5" y1="827" x2="121.5" y2="831" stroke="#fff" stroke-width="1" />
<line x1="181.5" y1="788" x2="181.5" y2="792" stroke="#fff" stroke-width="1" />
<line x1="181.5" y1="827" x2="181.5" y2="831" stroke="#fff" stroke-width="1" />
<line x1="241.5" y1="788" x2="241.5" y2="792" stroke="#fff" stroke-width="1" />
<line x1="241.5" y1="827" x2="241.5" y2="831" stroke="#fff" stroke-width="1" />
<line x1="301.5" y1="788" x2="301.5" y2="792" stroke="#fff" stroke-width="1" />
<line x1="301.5" y1="827" x2="301.5" y2="831" stroke="#fff" stroke-width="1" />
<line x1="361.5" y1="788" x2="361.5" y2="792" stroke="#fff" stroke-width="1" />
<line x1="361.5" y1="827" x2="361.5" y2="831" stroke="#fff" stroke-width="1" />
<line x1="421.5" y1="788" x2="421.5" y2="792" stroke="#fff" stroke-width="1" />
<line x1="421.5" y1="827" x2="421.5" y2="831" stroke="#fff" stroke-width="1" />
<line x1="481.5" y1="788" x2="481.5" y2="792" stroke="#fff" stroke-width="1" />
<line x1="481.5" y1="827" x2="481.5" y2="831" stroke="#fff" stroke-width="1" />
<line x1="541.5" y1="788" x2="541.5" y2="792" stroke="#fff" stroke-width="1" />
<line x1="541.5" y1="827" x2="541.5" y2="831" stroke="#fff" stroke-width="1" />
<line x1="601.5" y1="788" x2="601.5" y2="792" stroke="#fff" stroke-width="1" />
<line x1="601.5" y1="827" x2="601.5" y2="831" stroke="#fff" stroke-width="1" />
<line x1="661.5" y1="788" x2="661.5" y2="792" stroke="#fff" stroke-width="1" />
<line x1="661.5" y1="827" x2="661.5" y2="831" stroke="#fff" stroke-width="1" />
<line x1="61.5" y1="863" x2="61.5" y2="867" stroke="#fff" stroke-width="1" />
<line x1="136.5" y1="863" x2="136.5" y2="867" stroke="#fff" stroke-width="1" />
<line x1="211.5" y1="863" x2="211.5" y2="867" stroke="#fff" stroke-width="1" />
<line x1="286.5" y1="863" x2="286.5" y2="867" stroke="#fff" stroke-width="1" />
<line x1="361.5" y1="863" x2="361.5" y2="867" stroke="#fff" stroke-width="1" />
<line x1="436.5" y1="863" x2="436.5" y2="867" stroke="#fff" stroke-width="1" />
<line x1="511.5" y1="863" x2="511.5" y2="867" stroke="#fff" stroke-width="1" />
<line x1="586.5" y1="863" x2="586.5" y2="867" stroke="#fff" stroke-width="1" />
<line x1="661.5" y1="863" x2="661.5" y2="867" stroke="#fff" stroke-width="1" />
<rect x="729" y="827" width="15" height="8" fill="#ff0000"/>
<rect x="729" y="847" width="15" height="8" fill="#00ffff"/>
<rect x="729" y="867" width="15" height="8" fill="#00ff00"/>
<rect x="729" y="887" width="15" height="8" fill="#ff0080"/>
<rect x="729" y="907" width="15" height="8" fill="#c8c800"/>
<rect x="729" y="927" width="15" height="8" fill="#3c3800"/>
<rect x="1079" y="828" width="15" height="8" fill="#00ff00"/>
<rect x="1079" y="848" width="15" height="8" fill="#ffff00"/>
<rect x="1079" y="868" width="15" height="8" fill="#ff0000"/>
</svg>
<div class="t" style="left:62px;top:16px;color:#fff;font-size:16px;font-weight:700;letter-spacing:0.15px;">Station: Liestal</div><div class="t" style="left:204px;top:16px;color:#fff;font-size:16px;font-weight:700;letter-spacing:0.15px;">Date: 22.06.2017</div><div class="t" style="left:355px;top:16px;color:#fff;font-size:16px;font-weight:700;letter-spacing:0.15px;">Time: 1430Z</div><div class="t" style="right:1313px;top:43.0px;color:#fff;font-size:13px;font-weight:400;transform:scaleY(1.08);transform-origin:0 12.5px;">100</div><div class="t" style="right:1313px;top:314.0px;color:#fff;font-size:13px;font-weight:400;transform:scaleY(1.08);transform-origin:0 12.5px;">200</div><div class="t" style="right:1313px;top:442.0px;color:#fff;font-size:13px;font-weight:400;transform:scaleY(1.08);transform-origin:0 12.5px;">300</div><div class="t" style="right:1313px;top:522.0px;color:#fff;font-size:13px;font-weight:400;transform:scaleY(1.08);transform-origin:0 12.5px;">400</div><div class="t" style="right:1313px;top:579.0px;color:#fff;font-size:13px;font-weight:400;transform:scaleY(1.08);transform-origin:0 12.5px;">500</div><div class="t" style="right:1313px;top:623.0px;color:#fff;font-size:13px;font-weight:400;transform:scaleY(1.08);transform-origin:0 12.5px;">600</div><div class="t" style="right:1313px;top:658.0px;color:#fff;font-size:13px;font-weight:400;transform:scaleY(1.08);transform-origin:0 12.5px;">700</div><div class="t" style="right:1313px;top:687.0px;color:#fff;font-size:13px;font-weight:400;transform:scaleY(1.08);transform-origin:0 12.5px;">800</div><div class="t" style="right:1313px;top:712.0px;color:#fff;font-size:13px;font-weight:400;transform:scaleY(1.08);transform-origin:0 12.5px;">900</div><div class="t" style="right:1313px;top:733.0px;color:#fff;font-size:13px;font-weight:400;transform:scaleY(1.08);transform-origin:0 12.5px;">1000</div><div class="t" style="left:670px;top:43.0px;color:#fff;font-size:13px;font-weight:400;transform:scaleY(1.08);transform-origin:0 12.5px;">16565m</div><div class="t" style="left:670px;top:314.0px;color:#fff;font-size:13px;font-weight:400;transform:scaleY(1.08);transform-origin:0 12.5px;">12228m</div><div class="t" style="left:670px;top:442.0px;color:#fff;font-size:13px;font-weight:400;transform:scaleY(1.08);transform-origin:0 12.5px;">9572m</div><div class="t" style="left:670px;top:522.0px;color:#fff;font-size:13px;font-weight:400;transform:scaleY(1.08);transform-origin:0 12.5px;">7534m</div><div class="t" style="left:670px;top:579.0px;color:#fff;font-size:13px;font-weight:400;transform:scaleY(1.08);transform-origin:0 12.5px;">5861m</div><div class="t" style="left:670px;top:623.0px;color:#fff;font-size:13px;font-weight:400;transform:scaleY(1.08);transform-origin:0 12.5px;">4436m</div><div class="t" style="left:670px;top:658.0px;color:#fff;font-size:13px;font-weight:400;transform:scaleY(1.08);transform-origin:0 12.5px;">3188m</div><div class="t" style="left:670px;top:687.0px;color:#fff;font-size:13px;font-weight:400;transform:scaleY(1.08);transform-origin:0 12.5px;">2105m</div><div class="t" style="left:670px;top:712.0px;color:#fff;font-size:13px;font-weight:400;transform:scaleY(1.08);transform-origin:0 12.5px;">1064m</div><div class="t" style="left:59px;top:756px;color:#fff;font-size:13px;font-weight:400;transform:translateX(-50%) scaleY(1.08);transform-origin:50% 12.5px;">-50</div><div class="t" style="left:61px;top:794px;color:#fff;font-size:13px;font-weight:400;transform:translateX(-50%) scaleY(1.08);transform-origin:50% 12.5px;">0</div><div class="t" style="left:61px;top:831px;color:#fff;font-size:13px;font-weight:400;transform:translateX(-50%) scaleY(1.08);transform-origin:50% 12.5px;">0</div><div class="t" style="left:119px;top:756px;color:#fff;font-size:13px;font-weight:400;transform:translateX(-50%) scaleY(1.08);transform-origin:50% 12.5px;">-40</div><div class="t" style="left:121px;top:794px;color:#fff;font-size:13px;font-weight:400;transform:translateX(-50%) scaleY(1.08);transform-origin:50% 12.5px;">10</div><div class="t" style="left:121px;top:831px;color:#fff;font-size:13px;font-weight:400;transform:translateX(-50%) scaleY(1.08);transform-origin:50% 12.5px;">300</div><div class="t" style="left:179px;top:756px;color:#fff;font-size:13px;font-weight:400;transform:translateX(-50%) scaleY(1.08);transform-origin:50% 12.5px;">-30</div><div class="t" style="left:181px;top:794px;color:#fff;font-size:13px;font-weight:400;transform:translateX(-50%) scaleY(1.08);transform-origin:50% 12.5px;">20</div><div class="t" style="left:181px;top:831px;color:#fff;font-size:13px;font-weight:400;transform:translateX(-50%) scaleY(1.08);transform-origin:50% 12.5px;">600</div><div class="t" style="left:239px;top:756px;color:#fff;font-size:13px;font-weight:400;transform:translateX(-50%) scaleY(1.08);transform-origin:50% 12.5px;">-20</div><div class="t" style="left:241px;top:794px;color:#fff;font-size:13px;font-weight:400;transform:translateX(-50%) scaleY(1.08);transform-origin:50% 12.5px;">30</div><div class="t" style="left:241px;top:831px;color:#fff;font-size:13px;font-weight:400;transform:translateX(-50%) scaleY(1.08);transform-origin:50% 12.5px;">900</div><div class="t" style="left:299px;top:756px;color:#fff;font-size:13px;font-weight:400;transform:translateX(-50%) scaleY(1.08);transform-origin:50% 12.5px;">-10</div><div class="t" style="left:301px;top:794px;color:#fff;font-size:13px;font-weight:400;transform:translateX(-50%) scaleY(1.08);transform-origin:50% 12.5px;">40</div><div class="t" style="left:301px;top:831px;color:#fff;font-size:13px;font-weight:400;transform:translateX(-50%) scaleY(1.08);transform-origin:50% 12.5px;">1200</div><div class="t" style="left:361px;top:756px;color:#fff;font-size:13px;font-weight:400;transform:translateX(-50%) scaleY(1.08);transform-origin:50% 12.5px;">0</div><div class="t" style="left:361px;top:794px;color:#fff;font-size:13px;font-weight:400;transform:translateX(-50%) scaleY(1.08);transform-origin:50% 12.5px;">50</div><div class="t" style="left:361px;top:831px;color:#fff;font-size:13px;font-weight:400;transform:translateX(-50%) scaleY(1.08);transform-origin:50% 12.5px;">1500</div><div class="t" style="left:421px;top:756px;color:#fff;font-size:13px;font-weight:400;transform:translateX(-50%) scaleY(1.08);transform-origin:50% 12.5px;">10</div><div class="t" style="left:421px;top:794px;color:#fff;font-size:13px;font-weight:400;transform:translateX(-50%) scaleY(1.08);transform-origin:50% 12.5px;">60</div><div class="t" style="left:421px;top:831px;color:#fff;font-size:13px;font-weight:400;transform:translateX(-50%) scaleY(1.08);transform-origin:50% 12.5px;">1800</div><div class="t" style="left:481px;top:756px;color:#fff;font-size:13px;font-weight:400;transform:translateX(-50%) scaleY(1.08);transform-origin:50% 12.5px;">20</div><div class="t" style="left:481px;top:794px;color:#fff;font-size:13px;font-weight:400;transform:translateX(-50%) scaleY(1.08);transform-origin:50% 12.5px;">70</div><div class="t" style="left:481px;top:831px;color:#fff;font-size:13px;font-weight:400;transform:translateX(-50%) scaleY(1.08);transform-origin:50% 12.5px;">2100</div><div class="t" style="left:541px;top:756px;color:#fff;font-size:13px;font-weight:400;transform:translateX(-50%) scaleY(1.08);transform-origin:50% 12.5px;">30</div><div class="t" style="left:541px;top:794px;color:#fff;font-size:13px;font-weight:400;transform:translateX(-50%) scaleY(1.08);transform-origin:50% 12.5px;">80</div><div class="t" style="left:541px;top:831px;color:#fff;font-size:13px;font-weight:400;transform:translateX(-50%) scaleY(1.08);transform-origin:50% 12.5px;">2400</div><div class="t" style="left:601px;top:756px;color:#fff;font-size:13px;font-weight:400;transform:translateX(-50%) scaleY(1.08);transform-origin:50% 12.5px;">40</div><div class="t" style="left:601px;top:794px;color:#fff;font-size:13px;font-weight:400;transform:translateX(-50%) scaleY(1.08);transform-origin:50% 12.5px;">90</div><div class="t" style="left:601px;top:831px;color:#fff;font-size:13px;font-weight:400;transform:translateX(-50%) scaleY(1.08);transform-origin:50% 12.5px;">2700</div><div class="t" style="left:661px;top:756px;color:#fff;font-size:13px;font-weight:400;transform:translateX(-50%) scaleY(1.08);transform-origin:50% 12.5px;">50</div><div class="t" style="left:661px;top:794px;color:#fff;font-size:13px;font-weight:400;transform:translateX(-50%) scaleY(1.08);transform-origin:50% 12.5px;">100</div><div class="t" style="left:661px;top:831px;color:#fff;font-size:13px;font-weight:400;transform:translateX(-50%) scaleY(1.08);transform-origin:50% 12.5px;">3000</div><div class="t" style="left:59px;top:868px;color:#fff;font-size:13px;font-weight:400;transform:translateX(-50%) scaleY(1.08);transform-origin:50% 12.5px;">-100</div><div class="t" style="left:134px;top:868px;color:#fff;font-size:13px;font-weight:400;transform:translateX(-50%) scaleY(1.08);transform-origin:50% 12.5px;">-50</div><div class="t" style="left:211px;top:868px;color:#fff;font-size:13px;font-weight:400;transform:translateX(-50%) scaleY(1.08);transform-origin:50% 12.5px;">0</div><div class="t" style="left:286px;top:868px;color:#fff;font-size:13px;font-weight:400;transform:translateX(-50%) scaleY(1.08);transform-origin:50% 12.5px;">50</div><div class="t" style="left:361px;top:868px;color:#fff;font-size:13px;font-weight:400;transform:translateX(-50%) scaleY(1.08);transform-origin:50% 12.5px;">100</div><div class="t" style="left:436px;top:868px;color:#fff;font-size:13px;font-weight:400;transform:translateX(-50%) scaleY(1.08);transform-origin:50% 12.5px;">150</div><div class="t" style="left:511px;top:868px;color:#fff;font-size:13px;font-weight:400;transform:translateX(-50%) scaleY(1.08);transform-origin:50% 12.5px;">200</div><div class="t" style="left:586px;top:868px;color:#fff;font-size:13px;font-weight:400;transform:translateX(-50%) scaleY(1.08);transform-origin:50% 12.5px;">250</div><div class="t" style="left:661px;top:868px;color:#fff;font-size:13px;font-weight:400;transform:translateX(-50%) scaleY(1.08);transform-origin:50% 12.5px;">300</div><div class="t" style="left:361px;top:769px;color:#fff;font-size:13px;font-weight:400;transform:translateX(-50%) scaleY(1.08);transform-origin:50% 12.5px;">Temperature, Dewpoint  [ °C ]</div><div class="t" style="left:361px;top:807px;color:#fff;font-size:13px;font-weight:400;transform:translateX(-50%) scaleY(1.08);transform-origin:50% 12.5px;">Windspeed  [ knt ]</div><div class="t" style="left:361px;top:845px;color:#fff;font-size:13px;font-weight:400;transform:translateX(-50%) scaleY(1.08);transform-origin:50% 12.5px;">CAPE, CINH * 5  [ J/kg ]</div><div class="t" style="left:361px;top:881px;color:#fff;font-size:13px;font-weight:400;transform:translateX(-50%) scaleY(1.08);transform-origin:50% 12.5px;">Storm Relative Helicity  [ m^2/s^2 ]</div><div class="t" style="left:71px;top:608px;color:#ffff00;font-size:13px;font-weight:400;transform:scaleY(1.08);transform-origin:0 12.5px;">CAPE</div><div class="t" style="left:71px;top:637px;color:#e87800;font-size:13px;font-weight:400;transform:scaleY(1.08);transform-origin:0 12.5px;">CINH * 5</div><div class="t" style="left:628px;top:674px;color:#ff00ff;font-size:13px;font-weight:400;transform:scaleY(1.08);transform-origin:0 12.5px;">LCL</div><div class="t" style="left:761px;top:19px;color:#00ff00;font-size:13px;font-weight:700;transform:translateX(-50%) scaleY(1.08);transform-origin:50% 12.5px;">OBS</div><div class="t" style="left:826px;top:19px;color:#ff0080;font-size:13px;font-weight:700;transform:translateX(-50%) scaleY(1.08);transform-origin:50% 12.5px;">SR</div><div class="t" style="left:894px;top:28.5px;color:#fff;font-size:13px;font-weight:400;text-decoration:underline;transform:scaleY(1.08);transform-origin:0 12.5px;">Parameter</div><div class="t" style="right:242px;top:28.5px;color:#ffffff;font-size:13px;font-weight:400;text-decoration:underline;transform:scaleY(1.08);transform-origin:0 12.5px;">Value LCL</div><div class="t" style="right:152px;top:28.5px;color:#ffffff;font-size:13px;font-weight:400;text-decoration:underline;transform:scaleY(1.08);transform-origin:0 12.5px;">Value CCL</div><div class="t" style="left:1230px;top:28.5px;color:#ffffff;font-size:13px;font-weight:400;text-decoration:underline;transform:scaleY(1.08);transform-origin:0 12.5px;">Unit</div><div class="t" style="left:894px;top:50px;color:#fff;font-size:13px;font-weight:400;transform:scaleY(1.08);transform-origin:0 12.5px;">Convective Temperature:</div><div class="t" style="right:242px;top:50px;color:#ff0000;font-size:13px;font-weight:400;transform:scaleY(1.08);transform-origin:0 12.5px;">37.06</div><div class="t" style="left:1230px;top:50px;color:#ffffff;font-size:13px;font-weight:400;transform:scaleY(1.08);transform-origin:0 12.5px;">[°C]</div><div class="t" style="left:894px;top:67px;color:#fff;font-size:13px;font-weight:400;transform:scaleY(1.08);transform-origin:0 12.5px;">Snowfall Height:</div><div class="t" style="right:242px;top:67px;color:#ffffff;font-size:13px;font-weight:400;transform:scaleY(1.08);transform-origin:0 12.5px;">3494.36</div><div class="t" style="left:1230px;top:67px;color:#ffffff;font-size:13px;font-weight:400;transform:scaleY(1.08);transform-origin:0 12.5px;">[m]</div><div class="t" style="left:894px;top:92px;color:#fff;font-size:13px;font-weight:400;text-decoration:underline;transform:scaleY(1.08);transform-origin:0 12.5px;">Parcels: Using 50mB mean layer LCL + CCL</div><div class="t" style="left:894px;top:112px;color:#fff;font-size:13px;font-weight:400;transform:scaleY(1.08);transform-origin:0 12.5px;">Lifted Index:</div><div class="t" style="right:242px;top:112px;color:#ff0000;font-size:13px;font-weight:400;transform:scaleY(1.08);transform-origin:0 12.5px;">-5.48</div><div class="t" style="right:152px;top:112px;color:#ff0000;font-size:13px;font-weight:400;transform:scaleY(1.08);transform-origin:0 12.5px;">-7.13</div><div class="t" style="left:1230px;top:112px;color:#ffffff;font-size:13px;font-weight:400;transform:scaleY(1.08);transform-origin:0 12.5px;">[°C]</div><div class="t" style="left:894px;top:129px;color:#fff;font-size:13px;font-weight:400;transform:scaleY(1.08);transform-origin:0 12.5px;">CAPE:</div><div class="t" style="right:242px;top:129px;color:#ff0000;font-size:13px;font-weight:400;transform:scaleY(1.08);transform-origin:0 12.5px;">1875.75</div><div class="t" style="right:152px;top:129px;color:#ff0000;font-size:13px;font-weight:400;transform:scaleY(1.08);transform-origin:0 12.5px;">2611.05</div><div class="t" style="left:1230px;top:129px;color:#ffffff;font-size:13px;font-weight:400;transform:scaleY(1.08);transform-origin:0 12.5px;">[J/kg]</div><div class="t" style="left:894px;top:146px;color:#fff;font-size:13px;font-weight:400;transform:scaleY(1.08);transform-origin:0 12.5px;">CINH | LSI (LCL: 756mB):</div><div class="t" style="right:242px;top:146px;color:#ffff00;font-size:13px;font-weight:400;transform:scaleY(1.08);transform-origin:0 12.5px;margin-right:-3px;">117.44<span style="color:#fff">,</span></div><div class="t" style="left:1137px;top:146px;color:#ff0000;font-size:13px;font-weight:400;transform:scaleY(1.08);transform-origin:0 12.5px;">0.85</div><div class="t" style="left:1230px;top:146px;color:#ffffff;font-size:13px;font-weight:400;transform:scaleY(1.08);transform-origin:0 12.5px;">[J/kg], [°C]</div><div class="t" style="left:894px;top:163px;color:#fff;font-size:13px;font-weight:400;transform:scaleY(1.08);transform-origin:0 12.5px;">CAPE Virt.:</div><div class="t" style="right:242px;top:163px;color:#ff0000;font-size:13px;font-weight:400;transform:scaleY(1.08);transform-origin:0 12.5px;">1992.41</div><div class="t" style="right:152px;top:163px;color:#ff0000;font-size:13px;font-weight:400;transform:scaleY(1.08);transform-origin:0 12.5px;">2579.38</div><div class="t" style="left:1230px;top:163px;color:#ffffff;font-size:13px;font-weight:400;transform:scaleY(1.08);transform-origin:0 12.5px;">[J/kg]</div><div class="t" style="left:894px;top:180px;color:#fff;font-size:13px;font-weight:400;transform:scaleY(1.08);transform-origin:0 12.5px;">CINH Virt.:</div><div class="t" style="right:242px;top:180px;color:#ffff00;font-size:13px;font-weight:400;transform:scaleY(1.08);transform-origin:0 12.5px;">90.43</div><div class="t" style="left:1230px;top:180px;color:#ffffff;font-size:13px;font-weight:400;transform:scaleY(1.08);transform-origin:0 12.5px;">[J/kg]</div><div class="t" style="left:894px;top:197.5px;color:#fff;font-size:13px;font-weight:400;transform:scaleY(1.08);transform-origin:0 12.5px;">3km SFC CAPE | IL CAPE:</div><div class="t" style="right:242px;top:197.5px;color:#00ff00;font-size:13px;font-weight:400;transform:scaleY(1.08);transform-origin:0 12.5px;margin-right:-3px;">1.84<span style="color:#fff">,</span></div><div class="t" style="left:1137px;top:197.5px;color:#ff0000;font-size:13px;font-weight:400;transform:scaleY(1.08);transform-origin:0 12.5px;">3782.03</div><div class="t" style="left:1230px;top:197.5px;color:#ffffff;font-size:13px;font-weight:400;transform:scaleY(1.08);transform-origin:0 12.5px;">[J/kg]</div><div class="t" style="left:894px;top:214px;color:#fff;font-size:13px;font-weight:400;transform:scaleY(1.08);transform-origin:0 12.5px;">DCAPE (LFS = 500mB):</div><div class="t" style="right:242px;top:214px;color:#ff0000;font-size:13px;font-weight:400;transform:scaleY(1.08);transform-origin:0 12.5px;">992.47</div><div class="t" style="left:1230px;top:214px;color:#ffffff;font-size:13px;font-weight:400;transform:scaleY(1.08);transform-origin:0 12.5px;">[J/kg]</div><div class="t" style="left:894px;top:231px;color:#fff;font-size:13px;font-weight:400;transform:scaleY(1.08);transform-origin:0 12.5px;">850-600 Lapse Rate:</div><div class="t" style="right:242px;top:231px;color:#ff0000;font-size:13px;font-weight:400;transform:scaleY(1.08);transform-origin:0 12.5px;">23.06</div><div class="t" style="left:1230px;top:231px;color:#ffffff;font-size:13px;font-weight:400;transform:scaleY(1.08);transform-origin:0 12.5px;">[°C]</div><div class="t" style="left:894px;top:248px;color:#fff;font-size:13px;font-weight:400;transform:scaleY(1.08);transform-origin:0 12.5px;">FM Hail Size | SHIP | LHP:</div><div class="t" style="right:242px;top:248px;color:#ff0000;font-size:13px;font-weight:400;transform:scaleY(1.08);transform-origin:0 12.5px;margin-right:-3px;">2.5 - 3.8<span style="color:#fff">,</span></div><div class="t" style="left:1137px;top:248px;color:#ff0000;font-size:13px;font-weight:400;transform:scaleY(1.08);transform-origin:0 12.5px;">1.03<span style="color:#fff">,</span></div><div class="t" style="left:1173px;top:248px;color:#00ff00;font-size:13px;font-weight:400;transform:scaleY(1.08);transform-origin:0 12.5px;">0.00</div><div class="t" style="left:1230px;top:248px;color:#ffffff;font-size:13px;font-weight:400;transform:scaleY(1.08);transform-origin:0 12.5px;">[cm], [1], [1]</div><div class="t" style="left:894px;top:265px;color:#fff;font-size:13px;font-weight:400;transform:scaleY(1.08);transform-origin:0 12.5px;">Estofex Exp. Hail Param:</div><div class="t" style="right:242px;top:265px;color:#ff0000;font-size:13px;font-weight:400;transform:scaleY(1.08);transform-origin:0 12.5px;">3.85</div><div class="t" style="left:1230px;top:265px;color:#ffffff;font-size:13px;font-weight:400;transform:scaleY(1.08);transform-origin:0 12.5px;">[cm]</div><div class="t" style="left:894px;top:282px;color:#fff;font-size:13px;font-weight:400;transform:scaleY(1.08);transform-origin:0 12.5px;">Max. Hail Size (OLD, MU, IL):</div><div class="t" style="right:242px;top:282px;color:#ff0000;font-size:13px;font-weight:400;transform:scaleY(1.08);transform-origin:0 12.5px;margin-right:-3px;">3.76<span style="color:#fff">,</span></div><div class="t" style="left:1137px;top:282px;color:#ff0000;font-size:13px;font-weight:400;transform:scaleY(1.08);transform-origin:0 12.5px;">3.72<span style="color:#fff">,</span></div><div class="t" style="left:1173px;top:282px;color:#ff0000;font-size:13px;font-weight:400;transform:scaleY(1.08);transform-origin:0 12.5px;">9.59</div><div class="t" style="left:1230px;top:282px;color:#ffffff;font-size:13px;font-weight:400;transform:scaleY(1.08);transform-origin:0 12.5px;">[cm]</div><div class="t" style="left:894px;top:302px;color:#fff;font-size:13px;font-weight:400;transform:scaleY(1.08);transform-origin:0 12.5px;">LCL / CCL (AGL):</div><div class="t" style="right:242px;top:302px;color:#00ff00;font-size:13px;font-weight:400;transform:scaleY(1.08);transform-origin:0 12.5px;">2297.09</div><div class="t" style="right:152px;top:302px;color:#00ff00;font-size:13px;font-weight:400;transform:scaleY(1.08);transform-origin:0 12.5px;">2718.03</div><div class="t" style="left:1230px;top:302px;color:#ffffff;font-size:13px;font-weight:400;transform:scaleY(1.08);transform-origin:0 12.5px;">[m]</div><div class="t" style="left:894px;top:319px;color:#fff;font-size:13px;font-weight:400;transform:scaleY(1.08);transform-origin:0 12.5px;">Convective Height:</div><div class="t" style="right:242px;top:319px;color:#ff0000;font-size:13px;font-weight:400;transform:scaleY(1.08);transform-origin:0 12.5px;">9.78</div><div class="t" style="right:152px;top:319px;color:#ff0000;font-size:13px;font-weight:400;transform:scaleY(1.08);transform-origin:0 12.5px;">9.64</div><div class="t" style="left:1230px;top:319px;color:#ffffff;font-size:13px;font-weight:400;transform:scaleY(1.08);transform-origin:0 12.5px;">[km]</div><div class="t" style="left:894px;top:344px;color:#fff;font-size:13px;font-weight:400;text-decoration:underline;transform:scaleY(1.08);transform-origin:0 12.5px;">Convective Indices</div><div class="t" style="left:894px;top:364px;color:#fff;font-size:13px;font-weight:400;transform:scaleY(1.08);transform-origin:0 12.5px;">Showalter Index:</div><div class="t" style="right:242px;top:364px;color:#ff0000;font-size:13px;font-weight:400;transform:scaleY(1.08);transform-origin:0 12.5px;">-4.66</div><div class="t" style="left:1230px;top:364px;color:#ffffff;font-size:13px;font-weight:400;transform:scaleY(1.08);transform-origin:0 12.5px;">[°C]</div><div class="t" style="left:894px;top:381px;color:#fff;font-size:13px;font-weight:400;transform:scaleY(1.08);transform-origin:0 12.5px;">Modified Thompson Index:</div><div class="t" style="right:242px;top:381px;color:#ff0000;font-size:13px;font-weight:400;transform:scaleY(1.08);transform-origin:0 12.5px;">46.79</div><div class="t" style="left:1230px;top:381px;color:#ffffff;font-size:13px;font-weight:400;transform:scaleY(1.08);transform-origin:0 12.5px;">[°C]</div><div class="t" style="left:894px;top:398px;color:#fff;font-size:13px;font-weight:400;transform:scaleY(1.08);transform-origin:0 12.5px;">Total Totals Index:</div><div class="t" style="right:242px;top:398px;color:#ff0000;font-size:13px;font-weight:400;transform:scaleY(1.08);transform-origin:0 12.5px;">56.37</div><div class="t" style="left:1230px;top:398px;color:#ffffff;font-size:13px;font-weight:400;transform:scaleY(1.08);transform-origin:0 12.5px;">[°C]</div><div class="t" style="left:894px;top:415px;color:#fff;font-size:13px;font-weight:400;transform:scaleY(1.08);transform-origin:0 12.5px;">KO Index:</div><div class="t" style="right:242px;top:415px;color:#ff0000;font-size:13px;font-weight:400;transform:scaleY(1.08);transform-origin:0 12.5px;">-24.25</div><div class="t" style="left:1230px;top:415px;color:#ffffff;font-size:13px;font-weight:400;transform:scaleY(1.08);transform-origin:0 12.5px;">[1]</div><div class="t" style="left:894px;top:432px;color:#fff;font-size:13px;font-weight:400;transform:scaleY(1.08);transform-origin:0 12.5px;">Craven SigSvr / 1000:</div><div class="t" style="right:242px;top:432px;color:#ff0000;font-size:13px;font-weight:400;transform:scaleY(1.08);transform-origin:0 12.5px;">19.60</div><div class="t" style="left:1230px;top:432px;color:#ffffff;font-size:13px;font-weight:400;transform:scaleY(1.08);transform-origin:0 12.5px;">[m^3/s^3]</div><div class="t" style="left:894px;top:449px;color:#fff;font-size:13px;font-weight:400;transform:scaleY(1.08);transform-origin:0 12.5px;">SCP RM (new, old):</div><div class="t" style="right:242px;top:449px;color:#ffff00;font-size:13px;font-weight:400;transform:scaleY(1.08);transform-origin:0 12.5px;margin-right:-3px;">1.00<span style="color:#fff">,</span></div><div class="t" style="left:1137px;top:449px;color:#00ff00;font-size:13px;font-weight:400;transform:scaleY(1.08);transform-origin:0 12.5px;">0.15</div><div class="t" style="left:1230px;top:449px;color:#ffffff;font-size:13px;font-weight:400;transform:scaleY(1.08);transform-origin:0 12.5px;">[1]</div><div class="t" style="left:894px;top:466px;color:#fff;font-size:13px;font-weight:400;transform:scaleY(1.08);transform-origin:0 12.5px;">STP (new, old):</div><div class="t" style="right:242px;top:466px;color:#00ff00;font-size:13px;font-weight:400;transform:scaleY(1.08);transform-origin:0 12.5px;margin-right:-3px;">0.00<span style="color:#fff">,</span></div><div class="t" style="left:1137px;top:466px;color:#00ff00;font-size:13px;font-weight:400;transform:scaleY(1.08);transform-origin:0 12.5px;">0.00</div><div class="t" style="left:1230px;top:466px;color:#ffffff;font-size:13px;font-weight:400;transform:scaleY(1.08);transform-origin:0 12.5px;">[1]</div><div class="t" style="left:894px;top:483px;color:#fff;font-size:13px;font-weight:400;transform:scaleY(1.08);transform-origin:0 12.5px;">SB STP (fix) | CWASP:</div><div class="t" style="right:242px;top:483px;color:#00ff00;font-size:13px;font-weight:400;transform:scaleY(1.08);transform-origin:0 12.5px;margin-right:-3px;">0.00<span style="color:#fff">,</span></div><div class="t" style="left:1137px;top:483px;color:#00ff00;font-size:13px;font-weight:400;transform:scaleY(1.08);transform-origin:0 12.5px;">38.38</div><div class="t" style="left:1230px;top:483px;color:#ffffff;font-size:13px;font-weight:400;transform:scaleY(1.08);transform-origin:0 12.5px;">[1], [%]</div><div class="t" style="left:894px;top:500px;color:#fff;font-size:13px;font-weight:400;transform:scaleY(1.08);transform-origin:0 12.5px;">DCP | MMP | MSP:</div><div class="t" style="right:242px;top:500px;color:#ff0000;font-size:13px;font-weight:400;transform:scaleY(1.08);transform-origin:0 12.5px;margin-right:-3px;">0.87<span style="color:#fff">,</span></div><div class="t" style="left:1137px;top:500px;color:#00ff00;font-size:13px;font-weight:400;transform:scaleY(1.08);transform-origin:0 12.5px;">54.03<span style="color:#fff">,</span></div><div class="t" style="left:1179.5px;top:500px;color:#00ff00;font-size:13px;font-weight:400;transform:scaleY(1.08);transform-origin:0 12.5px;">41.47</div><div class="t" style="left:1230px;top:500px;color:#ffffff;font-size:13px;font-weight:400;transform:scaleY(1.08);transform-origin:0 12.5px;">[1], [%], [%]</div><div class="t" style="left:894px;top:517px;color:#fff;font-size:13px;font-weight:400;transform:scaleY(1.08);transform-origin:0 12.5px;">MB Comp | SHERBE:</div><div class="t" style="right:242px;top:517px;color:#00ff00;font-size:13px;font-weight:400;transform:scaleY(1.08);transform-origin:0 12.5px;margin-right:-3px;">0.00<span style="color:#fff">,</span></div><div class="t" style="left:1137px;top:517px;color:#ffff00;font-size:13px;font-weight:400;transform:scaleY(1.08);transform-origin:0 12.5px;">0.72</div><div class="t" style="left:1230px;top:517px;color:#ffffff;font-size:13px;font-weight:400;transform:scaleY(1.08);transform-origin:0 12.5px;">[1], [1]</div><div class="t" style="left:894px;top:534px;color:#fff;font-size:13px;font-weight:400;transform:scaleY(1.08);transform-origin:0 12.5px;">Exp. Supercell Index CH:</div><div class="t" style="right:242px;top:534px;color:#ff0000;font-size:13px;font-weight:400;transform:scaleY(1.08);transform-origin:0 12.5px;">2.54</div><div class="t" style="left:1230px;top:534px;color:#ffffff;font-size:13px;font-weight:400;transform:scaleY(1.08);transform-origin:0 12.5px;">[1]</div><div class="t" style="left:894px;top:551px;color:#fff;font-size:13px;font-weight:400;transform:scaleY(1.08);transform-origin:0 12.5px;">SWISS 12 Index:</div><div class="t" style="right:242px;top:551px;color:#ff0000;font-size:13px;font-weight:400;transform:scaleY(1.08);transform-origin:0 12.5px;">-6.82</div><div class="t" style="left:1230px;top:551px;color:#ffffff;font-size:13px;font-weight:400;transform:scaleY(1.08);transform-origin:0 12.5px;">[1]</div><div class="t" style="left:894px;top:568px;color:#fff;font-size:13px;font-weight:400;transform:scaleY(1.08);transform-origin:0 12.5px;">Precipitable Water:</div><div class="t" style="right:242px;top:568px;color:#ff0000;font-size:13px;font-weight:400;transform:scaleY(1.08);transform-origin:0 12.5px;">36.11</div><div class="t" style="left:1230px;top:568px;color:#ffffff;font-size:13px;font-weight:400;transform:scaleY(1.08);transform-origin:0 12.5px;">[mm]</div><div class="t" style="left:894px;top:593px;color:#fff;font-size:13px;font-weight:400;text-decoration:underline;transform:scaleY(1.08);transform-origin:0 12.5px;">Wind Parameters</div><div class="t" style="left:894px;top:613px;color:#fff;font-size:13px;font-weight:400;transform:scaleY(1.08);transform-origin:0 12.5px;">Storm Direction | Motion:</div><div class="t" style="right:242px;top:613px;color:#ffffff;font-size:13px;font-weight:400;transform:scaleY(1.08);transform-origin:0 12.5px;margin-right:-3px;">272.41<span style="color:#fff">,</span></div><div class="t" style="left:1137px;top:613px;color:#00ff00;font-size:13px;font-weight:400;transform:scaleY(1.08);transform-origin:0 12.5px;">11.83</div><div class="t" style="left:1230px;top:613px;color:#ffffff;font-size:13px;font-weight:400;transform:scaleY(1.08);transform-origin:0 12.5px;">[°], [knt]</div><div class="t" style="left:894px;top:630px;color:#fff;font-size:13px;font-weight:400;transform:scaleY(1.08);transform-origin:0 12.5px;">500m Critical Angle:</div><div class="t" style="right:242px;top:630px;color:#ffff00;font-size:13px;font-weight:400;transform:scaleY(1.08);transform-origin:0 12.5px;">75.04</div><div class="t" style="left:1230px;top:630px;color:#ffffff;font-size:13px;font-weight:400;transform:scaleY(1.08);transform-origin:0 12.5px;">[°]</div><div class="t" style="left:894px;top:650px;color:#fff;font-size:13px;font-weight:400;transform:scaleY(1.08);transform-origin:0 12.5px;">SR Wind Sfc-2km:</div><div class="t" style="right:242px;top:650px;color:#00ff00;font-size:13px;font-weight:400;transform:scaleY(1.08);transform-origin:0 12.5px;">7.22</div><div class="t" style="left:1230px;top:650px;color:#ffffff;font-size:13px;font-weight:400;transform:scaleY(1.08);transform-origin:0 12.5px;">[knt]</div><div class="t" style="left:894px;top:667px;color:#fff;font-size:13px;font-weight:400;transform:scaleY(1.08);transform-origin:0 12.5px;">SR Wind 4km-6km:</div><div class="t" style="right:242px;top:667px;color:#00ff00;font-size:13px;font-weight:400;transform:scaleY(1.08);transform-origin:0 12.5px;">8.80</div><div class="t" style="left:1230px;top:667px;color:#ffffff;font-size:13px;font-weight:400;transform:scaleY(1.08);transform-origin:0 12.5px;">[knt]</div><div class="t" style="left:894px;top:684px;color:#fff;font-size:13px;font-weight:400;transform:scaleY(1.08);transform-origin:0 12.5px;">SR Wind 9km-11km:</div><div class="t" style="right:242px;top:684px;color:#ff0000;font-size:13px;font-weight:400;transform:scaleY(1.08);transform-origin:0 12.5px;">18.12</div><div class="t" style="left:1230px;top:684px;color:#ffffff;font-size:13px;font-weight:400;transform:scaleY(1.08);transform-origin:0 12.5px;">[knt] HP</div><div class="t" style="left:894px;top:704px;color:#fff;font-size:13px;font-weight:400;transform:scaleY(1.08);transform-origin:0 12.5px;">Effective Shear 6000:</div><div class="t" style="right:242px;top:704px;color:#00ff00;font-size:13px;font-weight:400;transform:scaleY(1.08);transform-origin:0 12.5px;">20.31</div><div class="t" style="left:1230px;top:704px;color:#ffffff;font-size:13px;font-weight:400;transform:scaleY(1.08);transform-origin:0 12.5px;">[knt]</div><div class="t" style="left:894px;top:724px;color:#fff;font-size:13px;font-weight:400;transform:scaleY(1.08);transform-origin:0 12.5px;">Bulk Richardson Number:</div><div class="t" style="right:242px;top:724px;color:#ffff00;font-size:13px;font-weight:400;transform:scaleY(1.08);transform-origin:0 12.5px;">179.00</div><div class="t" style="right:152px;top:724px;color:#ffff00;font-size:13px;font-weight:400;transform:scaleY(1.08);transform-origin:0 12.5px;">249.17</div><div class="t" style="left:1230px;top:724px;color:#ffffff;font-size:13px;font-weight:400;transform:scaleY(1.08);transform-origin:0 12.5px;">[1]</div><div class="t" style="left:894px;top:744px;color:#fff;font-size:13px;font-weight:400;transform:scaleY(1.08);transform-origin:0 12.5px;">3km Effective SRH:</div><div class="t" style="right:242px;top:744px;color:#00ff00;font-size:13px;font-weight:400;transform:scaleY(1.08);transform-origin:0 12.5px;">25.94</div><div class="t" style="left:1230px;top:744px;color:#ffffff;font-size:13px;font-weight:400;transform:scaleY(1.08);transform-origin:0 12.5px;">[m^2/s^2]</div><div class="t" style="left:894px;top:761px;color:#fff;font-size:13px;font-weight:400;transform:scaleY(1.08);transform-origin:0 12.5px;">Max 3km SRH (0-2km) | AGL:</div><div class="t" style="right:242px;top:761px;color:#00ff00;font-size:13px;font-weight:400;transform:scaleY(1.08);transform-origin:0 12.5px;margin-right:-3px;">41.20<span style="color:#fff">,</span></div><div class="t" style="left:1137px;top:761px;color:#00ff00;font-size:13px;font-weight:400;transform:scaleY(1.08);transform-origin:0 12.5px;">1299.00</div><div class="t" style="left:1230px;top:761px;color:#ffffff;font-size:13px;font-weight:400;transform:scaleY(1.08);transform-origin:0 12.5px;">[m^2/s^2], [m]</div><div class="t" style="left:894px;top:781px;color:#fff;font-size:13px;font-weight:400;transform:scaleY(1.08);transform-origin:0 12.5px;">3km Energy Helicity Index:</div><div class="t" style="right:242px;top:781px;color:#00ff00;font-size:13px;font-weight:400;transform:scaleY(1.08);transform-origin:0 12.5px;">0.30</div><div class="t" style="right:152px;top:781px;color:#00ff00;font-size:13px;font-weight:400;transform:scaleY(1.08);transform-origin:0 12.5px;">0.42</div><div class="t" style="left:1230px;top:781px;color:#ffffff;font-size:13px;font-weight:400;transform:scaleY(1.08);transform-origin:0 12.5px;">[1]</div><div class="t" style="left:894px;top:798px;color:#fff;font-size:13px;font-weight:400;transform:scaleY(1.08);transform-origin:0 12.5px;">3km Vorticity Gen. Pot.:</div><div class="t" style="right:242px;top:798px;color:#00ff00;font-size:13px;font-weight:400;transform:scaleY(1.08);transform-origin:0 12.5px;">0.09</div><div class="t" style="right:152px;top:798px;color:#00ff00;font-size:13px;font-weight:400;transform:scaleY(1.08);transform-origin:0 12.5px;">0.10</div><div class="t" style="left:1230px;top:798px;color:#ffffff;font-size:13px;font-weight:400;transform:scaleY(1.08);transform-origin:0 12.5px;">[m/s^2]</div><div class="t" style="left:753px;top:823.5px;color:#ff0000;font-size:13px;font-weight:400;transform:scaleY(1.08);transform-origin:0 12.5px;">Temperature Profile</div><div class="t" style="left:753px;top:843.5px;color:#00ffff;font-size:13px;font-weight:400;transform:scaleY(1.08);transform-origin:0 12.5px;">Dewpoint Profile</div><div class="t" style="left:753px;top:863.5px;color:#00ff00;font-size:13px;font-weight:400;transform:scaleY(1.08);transform-origin:0 12.5px;">OBS Windspeed Profile</div><div class="t" style="left:753px;top:883.5px;color:#ff0080;font-size:13px;font-weight:400;transform:scaleY(1.08);transform-origin:0 12.5px;">SR Windspeed Profile</div><div class="t" style="left:753px;top:903.5px;color:#c8c800;font-size:13px;font-weight:400;transform:scaleY(1.08);transform-origin:0 12.5px;">Sfc-3km Storm Relative Helicity Profile</div><div class="t" style="left:753px;top:923.5px;color:#3c3800;font-size:13px;font-weight:400;transform:scaleY(1.08);transform-origin:0 12.5px;">Effective Layer (CAPE &gt;= 100 J/kg)</div><div class="t" style="left:1103px;top:824px;color:#00ff00;font-size:13px;font-weight:400;transform:scaleY(1.08);transform-origin:0 12.5px;">No / Non Severe Thunderstorms</div><div class="t" style="left:1103px;top:844px;color:#ffff00;font-size:13px;font-weight:400;transform:scaleY(1.08);transform-origin:0 12.5px;">Scattered / Moderate Thunderstorms</div><div class="t" style="left:1103px;top:864px;color:#ff0000;font-size:13px;font-weight:400;transform:scaleY(1.08);transform-origin:0 12.5px;">Widespread / Severe Thunderstorms</div>
</body></html>
